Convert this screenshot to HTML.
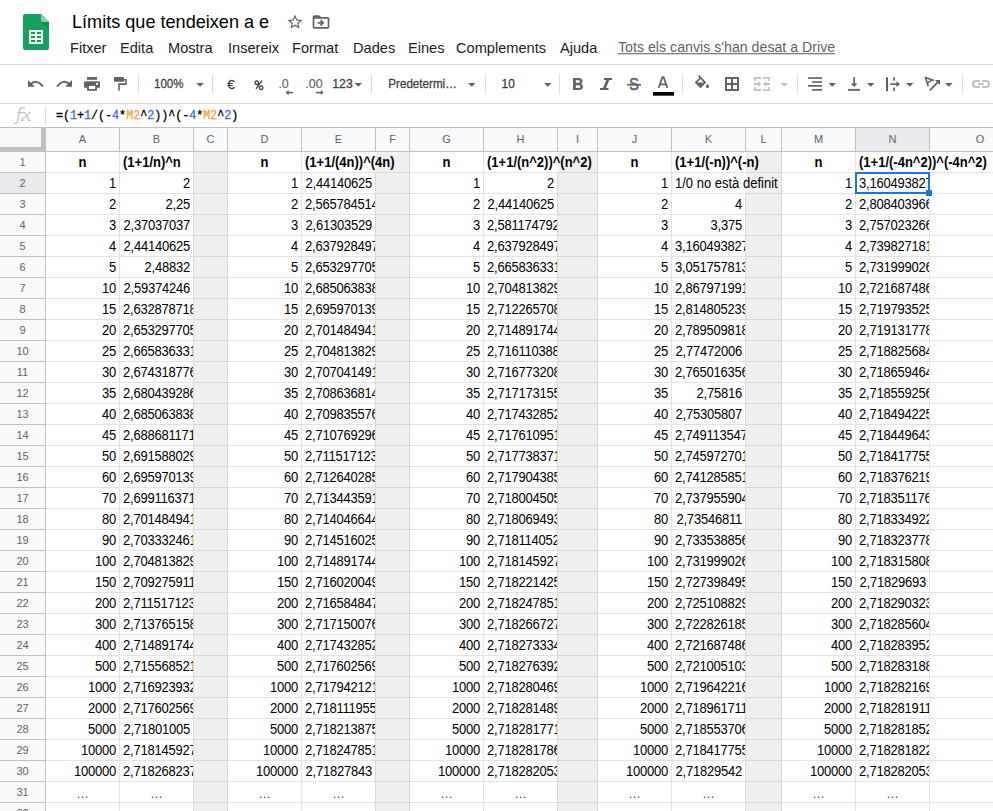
<!DOCTYPE html><html><head><meta charset="utf-8"><style>
*{margin:0;padding:0;box-sizing:border-box}
html,body{width:993px;height:811px;overflow:hidden;background:#fff}
body{position:relative;font-family:"Liberation Sans",sans-serif;color:#000}
.a{position:absolute}
.mi{position:absolute;top:40px;font-size:14.6px;color:#202124;white-space:nowrap;line-height:16px}
.hl{position:absolute;height:1px}
.vl{position:absolute;width:1px}
.ch{position:absolute;top:128px;height:23px;font-size:11px;color:#5f6368;text-align:center;line-height:23px}
.rh{position:absolute;left:0;width:45px;font-size:11px;color:#5f6368;text-align:center;line-height:20px}
.c{position:absolute;height:20px;font-size:13px;line-height:20px;white-space:nowrap;overflow:hidden;transform:translateY(0.7px) scaleY(1.1);transform-origin:0 14.6px}
.r{text-align:right;padding-right:3px;letter-spacing:-0.22px}
.l{text-align:left;padding-left:3px;letter-spacing:-0.22px}
.b{font-weight:bold;}
.ctr{text-align:center}
.dots{color:#444;letter-spacing:0.45px;transform:translateY(2.1px)!important;padding-left:0.45px}
.ov{overflow:visible}
</style></head><body>
<svg class="a" style="left:23px;top:14px" width="26" height="36" viewBox="0 0 26 36">
<path d="M2 0H18L26 8V34Q26 36 24 36H2Q0 36 0 34V2Q0 0 2 0Z" fill="#16a160"/>
<path d="M18 0L26 8H20Q18 8 18 6Z" fill="#87ceac"/>
<path d="M18 8L26 16V8Z" fill="#0b8043" opacity="0.45"/>
<rect x="6" y="16" width="14" height="14" fill="#f1f1f1"/>
<rect x="8" y="18" width="4" height="2" fill="#0f9d58"/><rect x="14" y="18" width="4" height="2" fill="#0f9d58"/>
<rect x="8" y="22" width="4" height="2" fill="#0f9d58"/><rect x="14" y="22" width="4" height="2" fill="#0f9d58"/>
<rect x="8" y="26" width="4" height="2" fill="#0f9d58"/><rect x="14" y="26" width="4" height="2" fill="#0f9d58"/>
</svg>
<div class="a" style="left:72px;top:11px;font-size:18.1px;line-height:22px;color:#000;white-space:nowrap">Límits que tendeixen a e</div>
<svg class="a" style="left:285.7px;top:13.3px" width="18" height="18" viewBox="0 0 24 24"><path fill="#5f6368" d="M22 9.24l-7.19-.62L12 2 9.19 8.63 2 9.24l5.46 4.73L5.82 21 12 17.27 18.18 21l-1.63-7.03L22 9.24zM12 15.4l-3.76 2.27 1-4.28-3.32-2.88 4.38-.38L12 6.1l1.71 4.04 4.38.38-3.32 2.88 1 4.28L12 15.4z"/></svg>
<svg class="a" style="left:311px;top:12px" width="20" height="20" viewBox="0 0 24 24"><path fill="#5f6368" d="M20 6h-8l-2-2H4c-1.1 0-1.99.9-1.99 2L2 18c0 1.1.9 2 2 2h16c1.1 0 2-.9 2-2V8c0-1.1-.9-2-2-2zm0 12H4V8h16v10zm-7.84-6H8v2h4.16l-1.59 1.59L11.99 17 16 13.01 11.99 9l-1.41 1.41L12.16 12z"/></svg>
<div class="mi" style="left:70px">Fitxer</div>
<div class="mi" style="left:120px">Edita</div>
<div class="mi" style="left:168px">Mostra</div>
<div class="mi" style="left:228px">Insereix</div>
<div class="mi" style="left:292px">Format</div>
<div class="mi" style="left:353px">Dades</div>
<div class="mi" style="left:408px">Eines</div>
<div class="mi" style="left:456px">Complements</div>
<div class="mi" style="left:560px">Ajuda</div>
<div class="mi" style="left:618px;top:39px;font-size:14.2px;transform:scaleY(1.08);transform-origin:0 12px;color:#5f6368;text-decoration:underline">Tots els canvis s'han desat a Drive</div>
<div class="hl" style="left:0;top:64px;width:993px;background:#dadce0"></div>
<div class="hl" style="left:0;top:103px;width:993px;background:#dadce0"></div>
<svg class="a" style="left:0;top:0" width="993" height="104" viewBox="0 0 993 104"><path fill="#5f6368" d="M28 80L28 86.8L34.8 86.8Z"/><path fill="none" stroke="#5f6368" stroke-width="1.9" d="M30.5 84.2Q36.5 78.5 43 86.4"/><path fill="#5f6368" d="M72 80L72 86.8L65.2 86.8Z"/><path fill="none" stroke="#5f6368" stroke-width="1.9" d="M69.5 84.2Q63.5 78.5 57 86.4"/><rect x="87" y="77" width="10" height="2.8" fill="#5f6368"/><path fill="#5f6368" d="M85.5 81.2H98.5Q100 81.2 100 82.7V87.7H97V90.7H87V87.7H84V82.7Q84 81.2 85.5 81.2Z"/><rect x="89" y="85.9" width="6.2" height="3.1" fill="#fff"/><rect x="96" y="83" width="2" height="1.8" fill="#fff"/><rect x="114" y="77.1" width="10" height="4.7" rx="0.6" fill="#5f6368"/><path fill="none" stroke="#5f6368" stroke-width="1.6" d="M124 79.7H126V84.1H119V90.7"/><rect x="138.0" y="74" width="1" height="20" fill="#dadce0"/><rect x="212.0" y="74" width="1" height="20" fill="#dadce0"/><rect x="371.0" y="74" width="1" height="20" fill="#dadce0"/><rect x="485.0" y="74" width="1" height="20" fill="#dadce0"/><rect x="559.0" y="74" width="1" height="20" fill="#dadce0"/><rect x="682.0" y="74" width="1" height="20" fill="#dadce0"/><rect x="797.0" y="74" width="1" height="20" fill="#dadce0"/><rect x="962.0" y="74" width="1" height="20" fill="#dadce0"/><path fill="#5f6368" d="M196.3 83H203.8L200.05 86.8Z"/><path fill="#5f6368" d="M354.5 83H362.0L358.25 86.8Z"/><path fill="#5f6368" d="M468 83H475.5L471.75 86.8Z"/><path fill="#5f6368" d="M544 83H551.5L547.75 86.8Z"/><path fill="#bdc1c6" d="M780.5 83H788.0L784.25 86.8Z"/><path fill="#5f6368" d="M828.5 83H836.0L832.25 86.8Z"/><path fill="#5f6368" d="M867 83H874.5L870.75 86.8Z"/><path fill="#5f6368" d="M906 83H913.5L909.75 86.8Z"/><path fill="#5f6368" d="M945 83H952.5L948.75 86.8Z"/><text x="629.2" y="90.3" font-family="Liberation Sans" font-size="16.5" fill="#5f6368" stroke="#5f6368" stroke-width="0.6" textLength="9.6" lengthAdjust="spacingAndGlyphs">S</text><rect x="627" y="83.9" width="14" height="1.7" fill="#5f6368"/><path fill="none" stroke="#5f6368" stroke-width="1.7" stroke-linejoin="miter" d="M658.6 87.9L662.4 77.1H663.6L667.4 87.9M660 84.4H666"/><rect x="653" y="92" width="21" height="3.7" fill="#000"/><path fill="#5f6368" transform="translate(566.5 74.6) scale(0.93 0.857)" d="M15.6 10.79c.97-.67 1.65-1.77 1.65-2.79 0-2.26-1.75-4-4-4H7v14h7.04c2.09 0 3.71-1.7 3.71-3.79 0-1.52-.86-2.82-2.1-3.42zM10 6.5h3c.83 0 1.5.67 1.5 1.5s-.67 1.5-1.5 1.5h-3v-3zm3.5 9H10v-3h3.5c.83 0 1.5.67 1.5 1.5s-.67 1.5-1.5 1.5z"/><path fill="#5f6368" d="M604 78H612V80H609.3L606 88H608.5V90H600V88H603L606.3 80H604Z"/><path fill="none" stroke="#5f6368" stroke-width="1.7" stroke-linejoin="miter" d="M698.6 75.6L705.1 82.5L700.5 87.1L695.9 82.5L700.5 77.9"/><path fill="#5f6368" d="M695.9 82.5H705.1L700.5 87.1Z"/><path fill="#5f6368" d="M707.5 83.8Q709.1 85.8 709.1 86.4A1.6 1.6 0 0 1 705.9 86.4Q705.9 85.8 707.5 83.8Z"/><path fill="none" stroke="#5f6368" stroke-width="2" d="M726 78H738V90H726ZM732 78V90M726 84H738"/><path fill="none" stroke="#bdc1c6" stroke-width="1.7" d="M754.8 81V77.9H760.8M763.2 77.9H769.2V81M754.8 87V90.1H760.8M763.2 90.1H769.2V87"/><path fill="#bdc1c6" d="M754 83.1H758.2V81L761 84L758.2 87V84.9H754ZM770 83.1H765.8V81L763 84L765.8 87V84.9H770Z"/><rect x="808" y="77.2" width="14" height="1.7" fill="#5f6368"/><rect x="812.2" y="81.2" width="9.799999999999955" height="1.7" fill="#5f6368"/><rect x="808" y="85" width="14" height="1.7" fill="#5f6368"/><rect x="812.2" y="89" width="9.799999999999955" height="1.7" fill="#5f6368"/><rect x="853.3" y="77.2" width="1.7" height="7" fill="#5f6368"/><path fill="#5f6368" d="M850.8 83.6H857.5L854.15 86.9Z"/><rect x="848" y="88.9" width="12" height="1.9" fill="#5f6368"/><rect x="886" y="77.2" width="2" height="14" fill="#5f6368"/><rect x="893.2" y="77.2" width="1.7" height="3.5" fill="#5f6368"/><rect x="893.2" y="87.6" width="1.7" height="3.5" fill="#5f6368"/><rect x="890.3" y="83.3" width="7" height="1.7" fill="#5f6368"/><path fill="#5f6368" d="M896.5 81L900 84.15L896.5 87.3Z"/><path fill="none" stroke="#5f6368" stroke-width="1.6" stroke-linejoin="round" d="M934 80.6L925.4 77.4L928.2 86.2M927.3 83.1L932 79.9"/><path fill="none" stroke="#5f6368" stroke-width="1.8" d="M929.8 90.4L938.8 81.2"/><path fill="#5f6368" d="M940 80V85L935 80Z"/><path fill="none" stroke="#bdc1c6" stroke-width="2" d="M980 80.9H976.2Q972.9 80.9 972.9 83.9Q972.9 86.9 976.2 86.9H980M982 80.9H985.8Q989 80.9 989 83.9Q989 86.9 985.8 86.9H982M978.1 84H983.8"/></svg>
<svg class="a" style="left:0;top:0" width="993" height="104" viewBox="0 0 993 104"><text x="154" y="88.2" font-family="Liberation Sans" font-size="13" font-weight="normal" fill="#3c4043" stroke="#3c4043" stroke-width="0.3" textLength="29.5" lengthAdjust="spacingAndGlyphs">100%</text><text x="227.2" y="89" font-family="Liberation Sans" font-size="13" font-weight="normal" fill="#3c4043" stroke="#3c4043" stroke-width="0.35" textLength="7.4" lengthAdjust="spacingAndGlyphs">€</text><path fill="none" stroke="#3c4043" stroke-width="1.35" d="M256.8 80.8A1.7 1.9 0 1 0 256.81 80.8ZM261.2 85.8A1.7 1.9 0 1 0 261.21 85.8ZM262 80.6L256 88.8"/><text x="278.4" y="88" font-family="Liberation Sans" font-size="13.4" font-weight="normal" fill="#5f6368" stroke="#5f6368" stroke-width="0.15" textLength="10.4" lengthAdjust="spacingAndGlyphs">.0</text><text x="305.3" y="88.2" font-family="Liberation Sans" font-size="13.4" font-weight="normal" fill="#5f6368" stroke="#5f6368" stroke-width="0.15" textLength="17.3" lengthAdjust="spacingAndGlyphs">.00</text><text x="332.3" y="88.2" font-family="Liberation Sans" font-size="13" font-weight="normal" fill="#3c4043" stroke="#3c4043" stroke-width="0.3" textLength="20.4" lengthAdjust="spacingAndGlyphs">123</text><text x="388.3" y="88" font-family="Liberation Sans" font-size="13" font-weight="normal" fill="#3c4043" stroke="#3c4043" stroke-width="0.3" textLength="68.5" lengthAdjust="spacingAndGlyphs">Predetermi…</text><text x="501.6" y="88" font-family="Liberation Sans" font-size="13" font-weight="normal" fill="#3c4043" stroke="#3c4043" stroke-width="0.3" textLength="13.3" lengthAdjust="spacingAndGlyphs">10</text></svg>
<svg class="a" style="left:284px;top:88px" width="10" height="8"><path fill="#5f6368" d="M2 3.8H9V5.4H2Z"/><path fill="#5f6368" d="M1.8 4.6L4.6 2V7.2Z"/></svg>
<svg class="a" style="left:315px;top:88px" width="10" height="8"><path fill="#5f6368" d="M1 3.8H7V5.4H1Z"/><path fill="#5f6368" d="M8.6 4.6L5.8 2V7.2Z"/></svg>
<svg class="a" style="left:0;top:104px" width="45" height="23" viewBox="0 104 45 23"><path fill="none" stroke="#c4c4c4" stroke-width="1.25" d="M13.6 122.3Q14.8 124.6 16.6 123.2Q17.6 122 18.3 117L19.6 110.5Q20.3 107.5 22.5 107.5Q24.5 107.7 24.3 109.2M17.2 112.7H25.5M21 120.4L30.3 112.4M24.6 112.4L29.3 120.4M20.6 120.4H23.5M27.8 120.4H31M28.5 112.4H30.7"/></svg>
<div class="vl" style="left:45px;top:107px;height:18px;background:#dadce0"></div>
<div class="a" style="left:56px;top:108px;font-family:'Liberation Mono',monospace;font-size:13.4px;line-height:16px;white-space:nowrap;transform:scaleX(0.872);transform-origin:0 0;-webkit-text-stroke:0.35px currentColor"><span style="color:#000">=(</span><span style="color:#3d6dd6">1</span><span style="color:#000">+</span><span style="color:#3d6dd6">1</span><span style="color:#000">/(-</span><span style="color:#3d6dd6">4</span><span style="color:#000">*</span><span style="color:#f4a33a">M2</span><span style="color:#000">^</span><span style="color:#3d6dd6">2</span><span style="color:#000">))^(-</span><span style="color:#3d6dd6">4</span><span style="color:#000">*</span><span style="color:#f4a33a">M2</span><span style="color:#000">^</span><span style="color:#3d6dd6">2</span><span style="color:#000">)</span></div>
<div class="a" style="left:0;top:128px;width:993px;height:23px;background:#f8f9fa"></div>
<div class="a" style="left:0;top:152px;width:45px;height:659px;background:#f8f9fa"></div>
<div class="a" style="left:856px;top:128px;width:73px;height:23px;background:#e8eaed"></div>
<div class="a" style="left:0;top:173px;width:45px;height:20px;background:#e8eaed"></div>
<div class="a" style="left:194px;top:152px;width:33px;height:659px;background:#efefef"></div>
<div class="a" style="left:376px;top:152px;width:33px;height:659px;background:#efefef"></div>
<div class="a" style="left:558px;top:152px;width:39px;height:659px;background:#efefef"></div>
<div class="a" style="left:746px;top:152px;width:35px;height:659px;background:#efefef"></div>
<div class="hl" style="left:0;top:127px;width:993px;background:#c0c0c0"></div>
<div class="hl" style="left:0;top:151px;width:993px;background:#c0c0c0"></div>
<div class="vl" style="left:45px;top:128px;height:23px;background:#c0c0c0"></div>
<div class="vl" style="left:119px;top:128px;height:23px;background:#c0c0c0"></div>
<div class="vl" style="left:193px;top:128px;height:23px;background:#c0c0c0"></div>
<div class="vl" style="left:227px;top:128px;height:23px;background:#c0c0c0"></div>
<div class="vl" style="left:301px;top:128px;height:23px;background:#c0c0c0"></div>
<div class="vl" style="left:375px;top:128px;height:23px;background:#c0c0c0"></div>
<div class="vl" style="left:409px;top:128px;height:23px;background:#c0c0c0"></div>
<div class="vl" style="left:483px;top:128px;height:23px;background:#c0c0c0"></div>
<div class="vl" style="left:557px;top:128px;height:23px;background:#c0c0c0"></div>
<div class="vl" style="left:597px;top:128px;height:23px;background:#c0c0c0"></div>
<div class="vl" style="left:671px;top:128px;height:23px;background:#c0c0c0"></div>
<div class="vl" style="left:745px;top:128px;height:23px;background:#c0c0c0"></div>
<div class="vl" style="left:781px;top:128px;height:23px;background:#c0c0c0"></div>
<div class="vl" style="left:855px;top:128px;height:23px;background:#c0c0c0"></div>
<div class="vl" style="left:929px;top:128px;height:23px;background:#c0c0c0"></div>
<div class="ch" style="left:46px;width:73px;color:#5f6368">A</div>
<div class="ch" style="left:120px;width:73px;color:#5f6368">B</div>
<div class="ch" style="left:194px;width:33px;color:#5f6368">C</div>
<div class="ch" style="left:228px;width:73px;color:#5f6368">D</div>
<div class="ch" style="left:302px;width:73px;color:#5f6368">E</div>
<div class="ch" style="left:376px;width:33px;color:#5f6368">F</div>
<div class="ch" style="left:410px;width:73px;color:#5f6368">G</div>
<div class="ch" style="left:484px;width:73px;color:#5f6368">H</div>
<div class="ch" style="left:558px;width:39px;color:#5f6368">I</div>
<div class="ch" style="left:598px;width:73px;color:#5f6368">J</div>
<div class="ch" style="left:672px;width:73px;color:#5f6368">K</div>
<div class="ch" style="left:746px;width:35px;color:#5f6368">L</div>
<div class="ch" style="left:782px;width:73px;color:#5f6368">M</div>
<div class="ch" style="left:856px;width:73px;color:#5f6368">N</div>
<div class="ch" style="left:930px;width:100px;color:#5f6368">O</div>
<div class="a" style="left:41px;top:128px;width:5px;height:24px;background:#c0c0c0"></div>
<div class="a" style="left:0;top:147px;width:46px;height:5px;background:#c0c0c0"></div>
<div class="vl" style="left:45px;top:152px;height:659px;background:#c0c0c0"></div>
<div class="hl" style="left:0;top:172px;width:45px;background:#c0c0c0"></div>
<div class="hl" style="left:46px;top:172px;width:947px;background:#e2e3e3"></div>
<div class="hl" style="left:194px;top:172px;width:33px;background:#d7d7d7"></div>
<div class="hl" style="left:376px;top:172px;width:33px;background:#d7d7d7"></div>
<div class="hl" style="left:558px;top:172px;width:39px;background:#d7d7d7"></div>
<div class="hl" style="left:746px;top:172px;width:35px;background:#d7d7d7"></div>
<div class="rh" style="top:152px;height:20px;color:#5f6368">1</div>
<div class="vl" style="left:119px;top:152px;height:21px;background:#e2e3e3"></div>
<div class="vl" style="left:193px;top:152px;height:21px;background:#d7d7d7"></div>
<div class="vl" style="left:227px;top:152px;height:21px;background:#d7d7d7"></div>
<div class="vl" style="left:301px;top:152px;height:21px;background:#e2e3e3"></div>
<div class="vl" style="left:409px;top:152px;height:21px;background:#d7d7d7"></div>
<div class="vl" style="left:483px;top:152px;height:21px;background:#e2e3e3"></div>
<div class="vl" style="left:597px;top:152px;height:21px;background:#d7d7d7"></div>
<div class="vl" style="left:671px;top:152px;height:21px;background:#e2e3e3"></div>
<div class="vl" style="left:781px;top:152px;height:21px;background:#d7d7d7"></div>
<div class="vl" style="left:855px;top:152px;height:21px;background:#e2e3e3"></div>
<div class="hl" style="left:0;top:193px;width:45px;background:#c0c0c0"></div>
<div class="hl" style="left:46px;top:193px;width:947px;background:#e2e3e3"></div>
<div class="hl" style="left:194px;top:193px;width:33px;background:#d7d7d7"></div>
<div class="hl" style="left:376px;top:193px;width:33px;background:#d7d7d7"></div>
<div class="hl" style="left:558px;top:193px;width:39px;background:#d7d7d7"></div>
<div class="hl" style="left:746px;top:193px;width:35px;background:#d7d7d7"></div>
<div class="rh" style="top:173px;height:20px;color:#5f6368">2</div>
<div class="vl" style="left:119px;top:173px;height:21px;background:#e2e3e3"></div>
<div class="vl" style="left:193px;top:173px;height:21px;background:#d7d7d7"></div>
<div class="vl" style="left:227px;top:173px;height:21px;background:#d7d7d7"></div>
<div class="vl" style="left:301px;top:173px;height:21px;background:#e2e3e3"></div>
<div class="vl" style="left:375px;top:173px;height:21px;background:#d7d7d7"></div>
<div class="vl" style="left:409px;top:173px;height:21px;background:#d7d7d7"></div>
<div class="vl" style="left:483px;top:173px;height:21px;background:#e2e3e3"></div>
<div class="vl" style="left:557px;top:173px;height:21px;background:#d7d7d7"></div>
<div class="vl" style="left:597px;top:173px;height:21px;background:#d7d7d7"></div>
<div class="vl" style="left:671px;top:173px;height:21px;background:#e2e3e3"></div>
<div class="vl" style="left:781px;top:173px;height:21px;background:#d7d7d7"></div>
<div class="vl" style="left:855px;top:173px;height:21px;background:#e2e3e3"></div>
<div class="vl" style="left:929px;top:173px;height:21px;background:#e2e3e3"></div>
<div class="hl" style="left:0;top:214px;width:45px;background:#c0c0c0"></div>
<div class="hl" style="left:46px;top:214px;width:947px;background:#e2e3e3"></div>
<div class="hl" style="left:194px;top:214px;width:33px;background:#d7d7d7"></div>
<div class="hl" style="left:376px;top:214px;width:33px;background:#d7d7d7"></div>
<div class="hl" style="left:558px;top:214px;width:39px;background:#d7d7d7"></div>
<div class="hl" style="left:746px;top:214px;width:35px;background:#d7d7d7"></div>
<div class="rh" style="top:194px;height:20px;color:#5f6368">3</div>
<div class="vl" style="left:119px;top:194px;height:21px;background:#e2e3e3"></div>
<div class="vl" style="left:193px;top:194px;height:21px;background:#d7d7d7"></div>
<div class="vl" style="left:227px;top:194px;height:21px;background:#d7d7d7"></div>
<div class="vl" style="left:301px;top:194px;height:21px;background:#e2e3e3"></div>
<div class="vl" style="left:375px;top:194px;height:21px;background:#d7d7d7"></div>
<div class="vl" style="left:409px;top:194px;height:21px;background:#d7d7d7"></div>
<div class="vl" style="left:483px;top:194px;height:21px;background:#e2e3e3"></div>
<div class="vl" style="left:557px;top:194px;height:21px;background:#d7d7d7"></div>
<div class="vl" style="left:597px;top:194px;height:21px;background:#d7d7d7"></div>
<div class="vl" style="left:671px;top:194px;height:21px;background:#e2e3e3"></div>
<div class="vl" style="left:745px;top:194px;height:21px;background:#d7d7d7"></div>
<div class="vl" style="left:781px;top:194px;height:21px;background:#d7d7d7"></div>
<div class="vl" style="left:855px;top:194px;height:21px;background:#e2e3e3"></div>
<div class="vl" style="left:929px;top:194px;height:21px;background:#e2e3e3"></div>
<div class="hl" style="left:0;top:235px;width:45px;background:#c0c0c0"></div>
<div class="hl" style="left:46px;top:235px;width:947px;background:#e2e3e3"></div>
<div class="hl" style="left:194px;top:235px;width:33px;background:#d7d7d7"></div>
<div class="hl" style="left:376px;top:235px;width:33px;background:#d7d7d7"></div>
<div class="hl" style="left:558px;top:235px;width:39px;background:#d7d7d7"></div>
<div class="hl" style="left:746px;top:235px;width:35px;background:#d7d7d7"></div>
<div class="rh" style="top:215px;height:20px;color:#5f6368">4</div>
<div class="vl" style="left:119px;top:215px;height:21px;background:#e2e3e3"></div>
<div class="vl" style="left:193px;top:215px;height:21px;background:#d7d7d7"></div>
<div class="vl" style="left:227px;top:215px;height:21px;background:#d7d7d7"></div>
<div class="vl" style="left:301px;top:215px;height:21px;background:#e2e3e3"></div>
<div class="vl" style="left:375px;top:215px;height:21px;background:#d7d7d7"></div>
<div class="vl" style="left:409px;top:215px;height:21px;background:#d7d7d7"></div>
<div class="vl" style="left:483px;top:215px;height:21px;background:#e2e3e3"></div>
<div class="vl" style="left:557px;top:215px;height:21px;background:#d7d7d7"></div>
<div class="vl" style="left:597px;top:215px;height:21px;background:#d7d7d7"></div>
<div class="vl" style="left:671px;top:215px;height:21px;background:#e2e3e3"></div>
<div class="vl" style="left:745px;top:215px;height:21px;background:#d7d7d7"></div>
<div class="vl" style="left:781px;top:215px;height:21px;background:#d7d7d7"></div>
<div class="vl" style="left:855px;top:215px;height:21px;background:#e2e3e3"></div>
<div class="vl" style="left:929px;top:215px;height:21px;background:#e2e3e3"></div>
<div class="hl" style="left:0;top:256px;width:45px;background:#c0c0c0"></div>
<div class="hl" style="left:46px;top:256px;width:947px;background:#e2e3e3"></div>
<div class="hl" style="left:194px;top:256px;width:33px;background:#d7d7d7"></div>
<div class="hl" style="left:376px;top:256px;width:33px;background:#d7d7d7"></div>
<div class="hl" style="left:558px;top:256px;width:39px;background:#d7d7d7"></div>
<div class="hl" style="left:746px;top:256px;width:35px;background:#d7d7d7"></div>
<div class="rh" style="top:236px;height:20px;color:#5f6368">5</div>
<div class="vl" style="left:119px;top:236px;height:21px;background:#e2e3e3"></div>
<div class="vl" style="left:193px;top:236px;height:21px;background:#d7d7d7"></div>
<div class="vl" style="left:227px;top:236px;height:21px;background:#d7d7d7"></div>
<div class="vl" style="left:301px;top:236px;height:21px;background:#e2e3e3"></div>
<div class="vl" style="left:375px;top:236px;height:21px;background:#d7d7d7"></div>
<div class="vl" style="left:409px;top:236px;height:21px;background:#d7d7d7"></div>
<div class="vl" style="left:483px;top:236px;height:21px;background:#e2e3e3"></div>
<div class="vl" style="left:557px;top:236px;height:21px;background:#d7d7d7"></div>
<div class="vl" style="left:597px;top:236px;height:21px;background:#d7d7d7"></div>
<div class="vl" style="left:671px;top:236px;height:21px;background:#e2e3e3"></div>
<div class="vl" style="left:745px;top:236px;height:21px;background:#d7d7d7"></div>
<div class="vl" style="left:781px;top:236px;height:21px;background:#d7d7d7"></div>
<div class="vl" style="left:855px;top:236px;height:21px;background:#e2e3e3"></div>
<div class="vl" style="left:929px;top:236px;height:21px;background:#e2e3e3"></div>
<div class="hl" style="left:0;top:277px;width:45px;background:#c0c0c0"></div>
<div class="hl" style="left:46px;top:277px;width:947px;background:#e2e3e3"></div>
<div class="hl" style="left:194px;top:277px;width:33px;background:#d7d7d7"></div>
<div class="hl" style="left:376px;top:277px;width:33px;background:#d7d7d7"></div>
<div class="hl" style="left:558px;top:277px;width:39px;background:#d7d7d7"></div>
<div class="hl" style="left:746px;top:277px;width:35px;background:#d7d7d7"></div>
<div class="rh" style="top:257px;height:20px;color:#5f6368">6</div>
<div class="vl" style="left:119px;top:257px;height:21px;background:#e2e3e3"></div>
<div class="vl" style="left:193px;top:257px;height:21px;background:#d7d7d7"></div>
<div class="vl" style="left:227px;top:257px;height:21px;background:#d7d7d7"></div>
<div class="vl" style="left:301px;top:257px;height:21px;background:#e2e3e3"></div>
<div class="vl" style="left:375px;top:257px;height:21px;background:#d7d7d7"></div>
<div class="vl" style="left:409px;top:257px;height:21px;background:#d7d7d7"></div>
<div class="vl" style="left:483px;top:257px;height:21px;background:#e2e3e3"></div>
<div class="vl" style="left:557px;top:257px;height:21px;background:#d7d7d7"></div>
<div class="vl" style="left:597px;top:257px;height:21px;background:#d7d7d7"></div>
<div class="vl" style="left:671px;top:257px;height:21px;background:#e2e3e3"></div>
<div class="vl" style="left:745px;top:257px;height:21px;background:#d7d7d7"></div>
<div class="vl" style="left:781px;top:257px;height:21px;background:#d7d7d7"></div>
<div class="vl" style="left:855px;top:257px;height:21px;background:#e2e3e3"></div>
<div class="vl" style="left:929px;top:257px;height:21px;background:#e2e3e3"></div>
<div class="hl" style="left:0;top:298px;width:45px;background:#c0c0c0"></div>
<div class="hl" style="left:46px;top:298px;width:947px;background:#e2e3e3"></div>
<div class="hl" style="left:194px;top:298px;width:33px;background:#d7d7d7"></div>
<div class="hl" style="left:376px;top:298px;width:33px;background:#d7d7d7"></div>
<div class="hl" style="left:558px;top:298px;width:39px;background:#d7d7d7"></div>
<div class="hl" style="left:746px;top:298px;width:35px;background:#d7d7d7"></div>
<div class="rh" style="top:278px;height:20px;color:#5f6368">7</div>
<div class="vl" style="left:119px;top:278px;height:21px;background:#e2e3e3"></div>
<div class="vl" style="left:193px;top:278px;height:21px;background:#d7d7d7"></div>
<div class="vl" style="left:227px;top:278px;height:21px;background:#d7d7d7"></div>
<div class="vl" style="left:301px;top:278px;height:21px;background:#e2e3e3"></div>
<div class="vl" style="left:375px;top:278px;height:21px;background:#d7d7d7"></div>
<div class="vl" style="left:409px;top:278px;height:21px;background:#d7d7d7"></div>
<div class="vl" style="left:483px;top:278px;height:21px;background:#e2e3e3"></div>
<div class="vl" style="left:557px;top:278px;height:21px;background:#d7d7d7"></div>
<div class="vl" style="left:597px;top:278px;height:21px;background:#d7d7d7"></div>
<div class="vl" style="left:671px;top:278px;height:21px;background:#e2e3e3"></div>
<div class="vl" style="left:745px;top:278px;height:21px;background:#d7d7d7"></div>
<div class="vl" style="left:781px;top:278px;height:21px;background:#d7d7d7"></div>
<div class="vl" style="left:855px;top:278px;height:21px;background:#e2e3e3"></div>
<div class="vl" style="left:929px;top:278px;height:21px;background:#e2e3e3"></div>
<div class="hl" style="left:0;top:319px;width:45px;background:#c0c0c0"></div>
<div class="hl" style="left:46px;top:319px;width:947px;background:#e2e3e3"></div>
<div class="hl" style="left:194px;top:319px;width:33px;background:#d7d7d7"></div>
<div class="hl" style="left:376px;top:319px;width:33px;background:#d7d7d7"></div>
<div class="hl" style="left:558px;top:319px;width:39px;background:#d7d7d7"></div>
<div class="hl" style="left:746px;top:319px;width:35px;background:#d7d7d7"></div>
<div class="rh" style="top:299px;height:20px;color:#5f6368">8</div>
<div class="vl" style="left:119px;top:299px;height:21px;background:#e2e3e3"></div>
<div class="vl" style="left:193px;top:299px;height:21px;background:#d7d7d7"></div>
<div class="vl" style="left:227px;top:299px;height:21px;background:#d7d7d7"></div>
<div class="vl" style="left:301px;top:299px;height:21px;background:#e2e3e3"></div>
<div class="vl" style="left:375px;top:299px;height:21px;background:#d7d7d7"></div>
<div class="vl" style="left:409px;top:299px;height:21px;background:#d7d7d7"></div>
<div class="vl" style="left:483px;top:299px;height:21px;background:#e2e3e3"></div>
<div class="vl" style="left:557px;top:299px;height:21px;background:#d7d7d7"></div>
<div class="vl" style="left:597px;top:299px;height:21px;background:#d7d7d7"></div>
<div class="vl" style="left:671px;top:299px;height:21px;background:#e2e3e3"></div>
<div class="vl" style="left:745px;top:299px;height:21px;background:#d7d7d7"></div>
<div class="vl" style="left:781px;top:299px;height:21px;background:#d7d7d7"></div>
<div class="vl" style="left:855px;top:299px;height:21px;background:#e2e3e3"></div>
<div class="vl" style="left:929px;top:299px;height:21px;background:#e2e3e3"></div>
<div class="hl" style="left:0;top:340px;width:45px;background:#c0c0c0"></div>
<div class="hl" style="left:46px;top:340px;width:947px;background:#e2e3e3"></div>
<div class="hl" style="left:194px;top:340px;width:33px;background:#d7d7d7"></div>
<div class="hl" style="left:376px;top:340px;width:33px;background:#d7d7d7"></div>
<div class="hl" style="left:558px;top:340px;width:39px;background:#d7d7d7"></div>
<div class="hl" style="left:746px;top:340px;width:35px;background:#d7d7d7"></div>
<div class="rh" style="top:320px;height:20px;color:#5f6368">9</div>
<div class="vl" style="left:119px;top:320px;height:21px;background:#e2e3e3"></div>
<div class="vl" style="left:193px;top:320px;height:21px;background:#d7d7d7"></div>
<div class="vl" style="left:227px;top:320px;height:21px;background:#d7d7d7"></div>
<div class="vl" style="left:301px;top:320px;height:21px;background:#e2e3e3"></div>
<div class="vl" style="left:375px;top:320px;height:21px;background:#d7d7d7"></div>
<div class="vl" style="left:409px;top:320px;height:21px;background:#d7d7d7"></div>
<div class="vl" style="left:483px;top:320px;height:21px;background:#e2e3e3"></div>
<div class="vl" style="left:557px;top:320px;height:21px;background:#d7d7d7"></div>
<div class="vl" style="left:597px;top:320px;height:21px;background:#d7d7d7"></div>
<div class="vl" style="left:671px;top:320px;height:21px;background:#e2e3e3"></div>
<div class="vl" style="left:745px;top:320px;height:21px;background:#d7d7d7"></div>
<div class="vl" style="left:781px;top:320px;height:21px;background:#d7d7d7"></div>
<div class="vl" style="left:855px;top:320px;height:21px;background:#e2e3e3"></div>
<div class="vl" style="left:929px;top:320px;height:21px;background:#e2e3e3"></div>
<div class="hl" style="left:0;top:361px;width:45px;background:#c0c0c0"></div>
<div class="hl" style="left:46px;top:361px;width:947px;background:#e2e3e3"></div>
<div class="hl" style="left:194px;top:361px;width:33px;background:#d7d7d7"></div>
<div class="hl" style="left:376px;top:361px;width:33px;background:#d7d7d7"></div>
<div class="hl" style="left:558px;top:361px;width:39px;background:#d7d7d7"></div>
<div class="hl" style="left:746px;top:361px;width:35px;background:#d7d7d7"></div>
<div class="rh" style="top:341px;height:20px;color:#5f6368">10</div>
<div class="vl" style="left:119px;top:341px;height:21px;background:#e2e3e3"></div>
<div class="vl" style="left:193px;top:341px;height:21px;background:#d7d7d7"></div>
<div class="vl" style="left:227px;top:341px;height:21px;background:#d7d7d7"></div>
<div class="vl" style="left:301px;top:341px;height:21px;background:#e2e3e3"></div>
<div class="vl" style="left:375px;top:341px;height:21px;background:#d7d7d7"></div>
<div class="vl" style="left:409px;top:341px;height:21px;background:#d7d7d7"></div>
<div class="vl" style="left:483px;top:341px;height:21px;background:#e2e3e3"></div>
<div class="vl" style="left:557px;top:341px;height:21px;background:#d7d7d7"></div>
<div class="vl" style="left:597px;top:341px;height:21px;background:#d7d7d7"></div>
<div class="vl" style="left:671px;top:341px;height:21px;background:#e2e3e3"></div>
<div class="vl" style="left:745px;top:341px;height:21px;background:#d7d7d7"></div>
<div class="vl" style="left:781px;top:341px;height:21px;background:#d7d7d7"></div>
<div class="vl" style="left:855px;top:341px;height:21px;background:#e2e3e3"></div>
<div class="vl" style="left:929px;top:341px;height:21px;background:#e2e3e3"></div>
<div class="hl" style="left:0;top:382px;width:45px;background:#c0c0c0"></div>
<div class="hl" style="left:46px;top:382px;width:947px;background:#e2e3e3"></div>
<div class="hl" style="left:194px;top:382px;width:33px;background:#d7d7d7"></div>
<div class="hl" style="left:376px;top:382px;width:33px;background:#d7d7d7"></div>
<div class="hl" style="left:558px;top:382px;width:39px;background:#d7d7d7"></div>
<div class="hl" style="left:746px;top:382px;width:35px;background:#d7d7d7"></div>
<div class="rh" style="top:362px;height:20px;color:#5f6368">11</div>
<div class="vl" style="left:119px;top:362px;height:21px;background:#e2e3e3"></div>
<div class="vl" style="left:193px;top:362px;height:21px;background:#d7d7d7"></div>
<div class="vl" style="left:227px;top:362px;height:21px;background:#d7d7d7"></div>
<div class="vl" style="left:301px;top:362px;height:21px;background:#e2e3e3"></div>
<div class="vl" style="left:375px;top:362px;height:21px;background:#d7d7d7"></div>
<div class="vl" style="left:409px;top:362px;height:21px;background:#d7d7d7"></div>
<div class="vl" style="left:483px;top:362px;height:21px;background:#e2e3e3"></div>
<div class="vl" style="left:557px;top:362px;height:21px;background:#d7d7d7"></div>
<div class="vl" style="left:597px;top:362px;height:21px;background:#d7d7d7"></div>
<div class="vl" style="left:671px;top:362px;height:21px;background:#e2e3e3"></div>
<div class="vl" style="left:745px;top:362px;height:21px;background:#d7d7d7"></div>
<div class="vl" style="left:781px;top:362px;height:21px;background:#d7d7d7"></div>
<div class="vl" style="left:855px;top:362px;height:21px;background:#e2e3e3"></div>
<div class="vl" style="left:929px;top:362px;height:21px;background:#e2e3e3"></div>
<div class="hl" style="left:0;top:403px;width:45px;background:#c0c0c0"></div>
<div class="hl" style="left:46px;top:403px;width:947px;background:#e2e3e3"></div>
<div class="hl" style="left:194px;top:403px;width:33px;background:#d7d7d7"></div>
<div class="hl" style="left:376px;top:403px;width:33px;background:#d7d7d7"></div>
<div class="hl" style="left:558px;top:403px;width:39px;background:#d7d7d7"></div>
<div class="hl" style="left:746px;top:403px;width:35px;background:#d7d7d7"></div>
<div class="rh" style="top:383px;height:20px;color:#5f6368">12</div>
<div class="vl" style="left:119px;top:383px;height:21px;background:#e2e3e3"></div>
<div class="vl" style="left:193px;top:383px;height:21px;background:#d7d7d7"></div>
<div class="vl" style="left:227px;top:383px;height:21px;background:#d7d7d7"></div>
<div class="vl" style="left:301px;top:383px;height:21px;background:#e2e3e3"></div>
<div class="vl" style="left:375px;top:383px;height:21px;background:#d7d7d7"></div>
<div class="vl" style="left:409px;top:383px;height:21px;background:#d7d7d7"></div>
<div class="vl" style="left:483px;top:383px;height:21px;background:#e2e3e3"></div>
<div class="vl" style="left:557px;top:383px;height:21px;background:#d7d7d7"></div>
<div class="vl" style="left:597px;top:383px;height:21px;background:#d7d7d7"></div>
<div class="vl" style="left:671px;top:383px;height:21px;background:#e2e3e3"></div>
<div class="vl" style="left:745px;top:383px;height:21px;background:#d7d7d7"></div>
<div class="vl" style="left:781px;top:383px;height:21px;background:#d7d7d7"></div>
<div class="vl" style="left:855px;top:383px;height:21px;background:#e2e3e3"></div>
<div class="vl" style="left:929px;top:383px;height:21px;background:#e2e3e3"></div>
<div class="hl" style="left:0;top:424px;width:45px;background:#c0c0c0"></div>
<div class="hl" style="left:46px;top:424px;width:947px;background:#e2e3e3"></div>
<div class="hl" style="left:194px;top:424px;width:33px;background:#d7d7d7"></div>
<div class="hl" style="left:376px;top:424px;width:33px;background:#d7d7d7"></div>
<div class="hl" style="left:558px;top:424px;width:39px;background:#d7d7d7"></div>
<div class="hl" style="left:746px;top:424px;width:35px;background:#d7d7d7"></div>
<div class="rh" style="top:404px;height:20px;color:#5f6368">13</div>
<div class="vl" style="left:119px;top:404px;height:21px;background:#e2e3e3"></div>
<div class="vl" style="left:193px;top:404px;height:21px;background:#d7d7d7"></div>
<div class="vl" style="left:227px;top:404px;height:21px;background:#d7d7d7"></div>
<div class="vl" style="left:301px;top:404px;height:21px;background:#e2e3e3"></div>
<div class="vl" style="left:375px;top:404px;height:21px;background:#d7d7d7"></div>
<div class="vl" style="left:409px;top:404px;height:21px;background:#d7d7d7"></div>
<div class="vl" style="left:483px;top:404px;height:21px;background:#e2e3e3"></div>
<div class="vl" style="left:557px;top:404px;height:21px;background:#d7d7d7"></div>
<div class="vl" style="left:597px;top:404px;height:21px;background:#d7d7d7"></div>
<div class="vl" style="left:671px;top:404px;height:21px;background:#e2e3e3"></div>
<div class="vl" style="left:745px;top:404px;height:21px;background:#d7d7d7"></div>
<div class="vl" style="left:781px;top:404px;height:21px;background:#d7d7d7"></div>
<div class="vl" style="left:855px;top:404px;height:21px;background:#e2e3e3"></div>
<div class="vl" style="left:929px;top:404px;height:21px;background:#e2e3e3"></div>
<div class="hl" style="left:0;top:445px;width:45px;background:#c0c0c0"></div>
<div class="hl" style="left:46px;top:445px;width:947px;background:#e2e3e3"></div>
<div class="hl" style="left:194px;top:445px;width:33px;background:#d7d7d7"></div>
<div class="hl" style="left:376px;top:445px;width:33px;background:#d7d7d7"></div>
<div class="hl" style="left:558px;top:445px;width:39px;background:#d7d7d7"></div>
<div class="hl" style="left:746px;top:445px;width:35px;background:#d7d7d7"></div>
<div class="rh" style="top:425px;height:20px;color:#5f6368">14</div>
<div class="vl" style="left:119px;top:425px;height:21px;background:#e2e3e3"></div>
<div class="vl" style="left:193px;top:425px;height:21px;background:#d7d7d7"></div>
<div class="vl" style="left:227px;top:425px;height:21px;background:#d7d7d7"></div>
<div class="vl" style="left:301px;top:425px;height:21px;background:#e2e3e3"></div>
<div class="vl" style="left:375px;top:425px;height:21px;background:#d7d7d7"></div>
<div class="vl" style="left:409px;top:425px;height:21px;background:#d7d7d7"></div>
<div class="vl" style="left:483px;top:425px;height:21px;background:#e2e3e3"></div>
<div class="vl" style="left:557px;top:425px;height:21px;background:#d7d7d7"></div>
<div class="vl" style="left:597px;top:425px;height:21px;background:#d7d7d7"></div>
<div class="vl" style="left:671px;top:425px;height:21px;background:#e2e3e3"></div>
<div class="vl" style="left:745px;top:425px;height:21px;background:#d7d7d7"></div>
<div class="vl" style="left:781px;top:425px;height:21px;background:#d7d7d7"></div>
<div class="vl" style="left:855px;top:425px;height:21px;background:#e2e3e3"></div>
<div class="vl" style="left:929px;top:425px;height:21px;background:#e2e3e3"></div>
<div class="hl" style="left:0;top:466px;width:45px;background:#c0c0c0"></div>
<div class="hl" style="left:46px;top:466px;width:947px;background:#e2e3e3"></div>
<div class="hl" style="left:194px;top:466px;width:33px;background:#d7d7d7"></div>
<div class="hl" style="left:376px;top:466px;width:33px;background:#d7d7d7"></div>
<div class="hl" style="left:558px;top:466px;width:39px;background:#d7d7d7"></div>
<div class="hl" style="left:746px;top:466px;width:35px;background:#d7d7d7"></div>
<div class="rh" style="top:446px;height:20px;color:#5f6368">15</div>
<div class="vl" style="left:119px;top:446px;height:21px;background:#e2e3e3"></div>
<div class="vl" style="left:193px;top:446px;height:21px;background:#d7d7d7"></div>
<div class="vl" style="left:227px;top:446px;height:21px;background:#d7d7d7"></div>
<div class="vl" style="left:301px;top:446px;height:21px;background:#e2e3e3"></div>
<div class="vl" style="left:375px;top:446px;height:21px;background:#d7d7d7"></div>
<div class="vl" style="left:409px;top:446px;height:21px;background:#d7d7d7"></div>
<div class="vl" style="left:483px;top:446px;height:21px;background:#e2e3e3"></div>
<div class="vl" style="left:557px;top:446px;height:21px;background:#d7d7d7"></div>
<div class="vl" style="left:597px;top:446px;height:21px;background:#d7d7d7"></div>
<div class="vl" style="left:671px;top:446px;height:21px;background:#e2e3e3"></div>
<div class="vl" style="left:745px;top:446px;height:21px;background:#d7d7d7"></div>
<div class="vl" style="left:781px;top:446px;height:21px;background:#d7d7d7"></div>
<div class="vl" style="left:855px;top:446px;height:21px;background:#e2e3e3"></div>
<div class="vl" style="left:929px;top:446px;height:21px;background:#e2e3e3"></div>
<div class="hl" style="left:0;top:487px;width:45px;background:#c0c0c0"></div>
<div class="hl" style="left:46px;top:487px;width:947px;background:#e2e3e3"></div>
<div class="hl" style="left:194px;top:487px;width:33px;background:#d7d7d7"></div>
<div class="hl" style="left:376px;top:487px;width:33px;background:#d7d7d7"></div>
<div class="hl" style="left:558px;top:487px;width:39px;background:#d7d7d7"></div>
<div class="hl" style="left:746px;top:487px;width:35px;background:#d7d7d7"></div>
<div class="rh" style="top:467px;height:20px;color:#5f6368">16</div>
<div class="vl" style="left:119px;top:467px;height:21px;background:#e2e3e3"></div>
<div class="vl" style="left:193px;top:467px;height:21px;background:#d7d7d7"></div>
<div class="vl" style="left:227px;top:467px;height:21px;background:#d7d7d7"></div>
<div class="vl" style="left:301px;top:467px;height:21px;background:#e2e3e3"></div>
<div class="vl" style="left:375px;top:467px;height:21px;background:#d7d7d7"></div>
<div class="vl" style="left:409px;top:467px;height:21px;background:#d7d7d7"></div>
<div class="vl" style="left:483px;top:467px;height:21px;background:#e2e3e3"></div>
<div class="vl" style="left:557px;top:467px;height:21px;background:#d7d7d7"></div>
<div class="vl" style="left:597px;top:467px;height:21px;background:#d7d7d7"></div>
<div class="vl" style="left:671px;top:467px;height:21px;background:#e2e3e3"></div>
<div class="vl" style="left:745px;top:467px;height:21px;background:#d7d7d7"></div>
<div class="vl" style="left:781px;top:467px;height:21px;background:#d7d7d7"></div>
<div class="vl" style="left:855px;top:467px;height:21px;background:#e2e3e3"></div>
<div class="vl" style="left:929px;top:467px;height:21px;background:#e2e3e3"></div>
<div class="hl" style="left:0;top:508px;width:45px;background:#c0c0c0"></div>
<div class="hl" style="left:46px;top:508px;width:947px;background:#e2e3e3"></div>
<div class="hl" style="left:194px;top:508px;width:33px;background:#d7d7d7"></div>
<div class="hl" style="left:376px;top:508px;width:33px;background:#d7d7d7"></div>
<div class="hl" style="left:558px;top:508px;width:39px;background:#d7d7d7"></div>
<div class="hl" style="left:746px;top:508px;width:35px;background:#d7d7d7"></div>
<div class="rh" style="top:488px;height:20px;color:#5f6368">17</div>
<div class="vl" style="left:119px;top:488px;height:21px;background:#e2e3e3"></div>
<div class="vl" style="left:193px;top:488px;height:21px;background:#d7d7d7"></div>
<div class="vl" style="left:227px;top:488px;height:21px;background:#d7d7d7"></div>
<div class="vl" style="left:301px;top:488px;height:21px;background:#e2e3e3"></div>
<div class="vl" style="left:375px;top:488px;height:21px;background:#d7d7d7"></div>
<div class="vl" style="left:409px;top:488px;height:21px;background:#d7d7d7"></div>
<div class="vl" style="left:483px;top:488px;height:21px;background:#e2e3e3"></div>
<div class="vl" style="left:557px;top:488px;height:21px;background:#d7d7d7"></div>
<div class="vl" style="left:597px;top:488px;height:21px;background:#d7d7d7"></div>
<div class="vl" style="left:671px;top:488px;height:21px;background:#e2e3e3"></div>
<div class="vl" style="left:745px;top:488px;height:21px;background:#d7d7d7"></div>
<div class="vl" style="left:781px;top:488px;height:21px;background:#d7d7d7"></div>
<div class="vl" style="left:855px;top:488px;height:21px;background:#e2e3e3"></div>
<div class="vl" style="left:929px;top:488px;height:21px;background:#e2e3e3"></div>
<div class="hl" style="left:0;top:529px;width:45px;background:#c0c0c0"></div>
<div class="hl" style="left:46px;top:529px;width:947px;background:#e2e3e3"></div>
<div class="hl" style="left:194px;top:529px;width:33px;background:#d7d7d7"></div>
<div class="hl" style="left:376px;top:529px;width:33px;background:#d7d7d7"></div>
<div class="hl" style="left:558px;top:529px;width:39px;background:#d7d7d7"></div>
<div class="hl" style="left:746px;top:529px;width:35px;background:#d7d7d7"></div>
<div class="rh" style="top:509px;height:20px;color:#5f6368">18</div>
<div class="vl" style="left:119px;top:509px;height:21px;background:#e2e3e3"></div>
<div class="vl" style="left:193px;top:509px;height:21px;background:#d7d7d7"></div>
<div class="vl" style="left:227px;top:509px;height:21px;background:#d7d7d7"></div>
<div class="vl" style="left:301px;top:509px;height:21px;background:#e2e3e3"></div>
<div class="vl" style="left:375px;top:509px;height:21px;background:#d7d7d7"></div>
<div class="vl" style="left:409px;top:509px;height:21px;background:#d7d7d7"></div>
<div class="vl" style="left:483px;top:509px;height:21px;background:#e2e3e3"></div>
<div class="vl" style="left:557px;top:509px;height:21px;background:#d7d7d7"></div>
<div class="vl" style="left:597px;top:509px;height:21px;background:#d7d7d7"></div>
<div class="vl" style="left:671px;top:509px;height:21px;background:#e2e3e3"></div>
<div class="vl" style="left:745px;top:509px;height:21px;background:#d7d7d7"></div>
<div class="vl" style="left:781px;top:509px;height:21px;background:#d7d7d7"></div>
<div class="vl" style="left:855px;top:509px;height:21px;background:#e2e3e3"></div>
<div class="vl" style="left:929px;top:509px;height:21px;background:#e2e3e3"></div>
<div class="hl" style="left:0;top:550px;width:45px;background:#c0c0c0"></div>
<div class="hl" style="left:46px;top:550px;width:947px;background:#e2e3e3"></div>
<div class="hl" style="left:194px;top:550px;width:33px;background:#d7d7d7"></div>
<div class="hl" style="left:376px;top:550px;width:33px;background:#d7d7d7"></div>
<div class="hl" style="left:558px;top:550px;width:39px;background:#d7d7d7"></div>
<div class="hl" style="left:746px;top:550px;width:35px;background:#d7d7d7"></div>
<div class="rh" style="top:530px;height:20px;color:#5f6368">19</div>
<div class="vl" style="left:119px;top:530px;height:21px;background:#e2e3e3"></div>
<div class="vl" style="left:193px;top:530px;height:21px;background:#d7d7d7"></div>
<div class="vl" style="left:227px;top:530px;height:21px;background:#d7d7d7"></div>
<div class="vl" style="left:301px;top:530px;height:21px;background:#e2e3e3"></div>
<div class="vl" style="left:375px;top:530px;height:21px;background:#d7d7d7"></div>
<div class="vl" style="left:409px;top:530px;height:21px;background:#d7d7d7"></div>
<div class="vl" style="left:483px;top:530px;height:21px;background:#e2e3e3"></div>
<div class="vl" style="left:557px;top:530px;height:21px;background:#d7d7d7"></div>
<div class="vl" style="left:597px;top:530px;height:21px;background:#d7d7d7"></div>
<div class="vl" style="left:671px;top:530px;height:21px;background:#e2e3e3"></div>
<div class="vl" style="left:745px;top:530px;height:21px;background:#d7d7d7"></div>
<div class="vl" style="left:781px;top:530px;height:21px;background:#d7d7d7"></div>
<div class="vl" style="left:855px;top:530px;height:21px;background:#e2e3e3"></div>
<div class="vl" style="left:929px;top:530px;height:21px;background:#e2e3e3"></div>
<div class="hl" style="left:0;top:571px;width:45px;background:#c0c0c0"></div>
<div class="hl" style="left:46px;top:571px;width:947px;background:#e2e3e3"></div>
<div class="hl" style="left:194px;top:571px;width:33px;background:#d7d7d7"></div>
<div class="hl" style="left:376px;top:571px;width:33px;background:#d7d7d7"></div>
<div class="hl" style="left:558px;top:571px;width:39px;background:#d7d7d7"></div>
<div class="hl" style="left:746px;top:571px;width:35px;background:#d7d7d7"></div>
<div class="rh" style="top:551px;height:20px;color:#5f6368">20</div>
<div class="vl" style="left:119px;top:551px;height:21px;background:#e2e3e3"></div>
<div class="vl" style="left:193px;top:551px;height:21px;background:#d7d7d7"></div>
<div class="vl" style="left:227px;top:551px;height:21px;background:#d7d7d7"></div>
<div class="vl" style="left:301px;top:551px;height:21px;background:#e2e3e3"></div>
<div class="vl" style="left:375px;top:551px;height:21px;background:#d7d7d7"></div>
<div class="vl" style="left:409px;top:551px;height:21px;background:#d7d7d7"></div>
<div class="vl" style="left:483px;top:551px;height:21px;background:#e2e3e3"></div>
<div class="vl" style="left:557px;top:551px;height:21px;background:#d7d7d7"></div>
<div class="vl" style="left:597px;top:551px;height:21px;background:#d7d7d7"></div>
<div class="vl" style="left:671px;top:551px;height:21px;background:#e2e3e3"></div>
<div class="vl" style="left:745px;top:551px;height:21px;background:#d7d7d7"></div>
<div class="vl" style="left:781px;top:551px;height:21px;background:#d7d7d7"></div>
<div class="vl" style="left:855px;top:551px;height:21px;background:#e2e3e3"></div>
<div class="vl" style="left:929px;top:551px;height:21px;background:#e2e3e3"></div>
<div class="hl" style="left:0;top:592px;width:45px;background:#c0c0c0"></div>
<div class="hl" style="left:46px;top:592px;width:947px;background:#e2e3e3"></div>
<div class="hl" style="left:194px;top:592px;width:33px;background:#d7d7d7"></div>
<div class="hl" style="left:376px;top:592px;width:33px;background:#d7d7d7"></div>
<div class="hl" style="left:558px;top:592px;width:39px;background:#d7d7d7"></div>
<div class="hl" style="left:746px;top:592px;width:35px;background:#d7d7d7"></div>
<div class="rh" style="top:572px;height:20px;color:#5f6368">21</div>
<div class="vl" style="left:119px;top:572px;height:21px;background:#e2e3e3"></div>
<div class="vl" style="left:193px;top:572px;height:21px;background:#d7d7d7"></div>
<div class="vl" style="left:227px;top:572px;height:21px;background:#d7d7d7"></div>
<div class="vl" style="left:301px;top:572px;height:21px;background:#e2e3e3"></div>
<div class="vl" style="left:375px;top:572px;height:21px;background:#d7d7d7"></div>
<div class="vl" style="left:409px;top:572px;height:21px;background:#d7d7d7"></div>
<div class="vl" style="left:483px;top:572px;height:21px;background:#e2e3e3"></div>
<div class="vl" style="left:557px;top:572px;height:21px;background:#d7d7d7"></div>
<div class="vl" style="left:597px;top:572px;height:21px;background:#d7d7d7"></div>
<div class="vl" style="left:671px;top:572px;height:21px;background:#e2e3e3"></div>
<div class="vl" style="left:745px;top:572px;height:21px;background:#d7d7d7"></div>
<div class="vl" style="left:781px;top:572px;height:21px;background:#d7d7d7"></div>
<div class="vl" style="left:855px;top:572px;height:21px;background:#e2e3e3"></div>
<div class="vl" style="left:929px;top:572px;height:21px;background:#e2e3e3"></div>
<div class="hl" style="left:0;top:613px;width:45px;background:#c0c0c0"></div>
<div class="hl" style="left:46px;top:613px;width:947px;background:#e2e3e3"></div>
<div class="hl" style="left:194px;top:613px;width:33px;background:#d7d7d7"></div>
<div class="hl" style="left:376px;top:613px;width:33px;background:#d7d7d7"></div>
<div class="hl" style="left:558px;top:613px;width:39px;background:#d7d7d7"></div>
<div class="hl" style="left:746px;top:613px;width:35px;background:#d7d7d7"></div>
<div class="rh" style="top:593px;height:20px;color:#5f6368">22</div>
<div class="vl" style="left:119px;top:593px;height:21px;background:#e2e3e3"></div>
<div class="vl" style="left:193px;top:593px;height:21px;background:#d7d7d7"></div>
<div class="vl" style="left:227px;top:593px;height:21px;background:#d7d7d7"></div>
<div class="vl" style="left:301px;top:593px;height:21px;background:#e2e3e3"></div>
<div class="vl" style="left:375px;top:593px;height:21px;background:#d7d7d7"></div>
<div class="vl" style="left:409px;top:593px;height:21px;background:#d7d7d7"></div>
<div class="vl" style="left:483px;top:593px;height:21px;background:#e2e3e3"></div>
<div class="vl" style="left:557px;top:593px;height:21px;background:#d7d7d7"></div>
<div class="vl" style="left:597px;top:593px;height:21px;background:#d7d7d7"></div>
<div class="vl" style="left:671px;top:593px;height:21px;background:#e2e3e3"></div>
<div class="vl" style="left:745px;top:593px;height:21px;background:#d7d7d7"></div>
<div class="vl" style="left:781px;top:593px;height:21px;background:#d7d7d7"></div>
<div class="vl" style="left:855px;top:593px;height:21px;background:#e2e3e3"></div>
<div class="vl" style="left:929px;top:593px;height:21px;background:#e2e3e3"></div>
<div class="hl" style="left:0;top:634px;width:45px;background:#c0c0c0"></div>
<div class="hl" style="left:46px;top:634px;width:947px;background:#e2e3e3"></div>
<div class="hl" style="left:194px;top:634px;width:33px;background:#d7d7d7"></div>
<div class="hl" style="left:376px;top:634px;width:33px;background:#d7d7d7"></div>
<div class="hl" style="left:558px;top:634px;width:39px;background:#d7d7d7"></div>
<div class="hl" style="left:746px;top:634px;width:35px;background:#d7d7d7"></div>
<div class="rh" style="top:614px;height:20px;color:#5f6368">23</div>
<div class="vl" style="left:119px;top:614px;height:21px;background:#e2e3e3"></div>
<div class="vl" style="left:193px;top:614px;height:21px;background:#d7d7d7"></div>
<div class="vl" style="left:227px;top:614px;height:21px;background:#d7d7d7"></div>
<div class="vl" style="left:301px;top:614px;height:21px;background:#e2e3e3"></div>
<div class="vl" style="left:375px;top:614px;height:21px;background:#d7d7d7"></div>
<div class="vl" style="left:409px;top:614px;height:21px;background:#d7d7d7"></div>
<div class="vl" style="left:483px;top:614px;height:21px;background:#e2e3e3"></div>
<div class="vl" style="left:557px;top:614px;height:21px;background:#d7d7d7"></div>
<div class="vl" style="left:597px;top:614px;height:21px;background:#d7d7d7"></div>
<div class="vl" style="left:671px;top:614px;height:21px;background:#e2e3e3"></div>
<div class="vl" style="left:745px;top:614px;height:21px;background:#d7d7d7"></div>
<div class="vl" style="left:781px;top:614px;height:21px;background:#d7d7d7"></div>
<div class="vl" style="left:855px;top:614px;height:21px;background:#e2e3e3"></div>
<div class="vl" style="left:929px;top:614px;height:21px;background:#e2e3e3"></div>
<div class="hl" style="left:0;top:655px;width:45px;background:#c0c0c0"></div>
<div class="hl" style="left:46px;top:655px;width:947px;background:#e2e3e3"></div>
<div class="hl" style="left:194px;top:655px;width:33px;background:#d7d7d7"></div>
<div class="hl" style="left:376px;top:655px;width:33px;background:#d7d7d7"></div>
<div class="hl" style="left:558px;top:655px;width:39px;background:#d7d7d7"></div>
<div class="hl" style="left:746px;top:655px;width:35px;background:#d7d7d7"></div>
<div class="rh" style="top:635px;height:20px;color:#5f6368">24</div>
<div class="vl" style="left:119px;top:635px;height:21px;background:#e2e3e3"></div>
<div class="vl" style="left:193px;top:635px;height:21px;background:#d7d7d7"></div>
<div class="vl" style="left:227px;top:635px;height:21px;background:#d7d7d7"></div>
<div class="vl" style="left:301px;top:635px;height:21px;background:#e2e3e3"></div>
<div class="vl" style="left:375px;top:635px;height:21px;background:#d7d7d7"></div>
<div class="vl" style="left:409px;top:635px;height:21px;background:#d7d7d7"></div>
<div class="vl" style="left:483px;top:635px;height:21px;background:#e2e3e3"></div>
<div class="vl" style="left:557px;top:635px;height:21px;background:#d7d7d7"></div>
<div class="vl" style="left:597px;top:635px;height:21px;background:#d7d7d7"></div>
<div class="vl" style="left:671px;top:635px;height:21px;background:#e2e3e3"></div>
<div class="vl" style="left:745px;top:635px;height:21px;background:#d7d7d7"></div>
<div class="vl" style="left:781px;top:635px;height:21px;background:#d7d7d7"></div>
<div class="vl" style="left:855px;top:635px;height:21px;background:#e2e3e3"></div>
<div class="vl" style="left:929px;top:635px;height:21px;background:#e2e3e3"></div>
<div class="hl" style="left:0;top:676px;width:45px;background:#c0c0c0"></div>
<div class="hl" style="left:46px;top:676px;width:947px;background:#e2e3e3"></div>
<div class="hl" style="left:194px;top:676px;width:33px;background:#d7d7d7"></div>
<div class="hl" style="left:376px;top:676px;width:33px;background:#d7d7d7"></div>
<div class="hl" style="left:558px;top:676px;width:39px;background:#d7d7d7"></div>
<div class="hl" style="left:746px;top:676px;width:35px;background:#d7d7d7"></div>
<div class="rh" style="top:656px;height:20px;color:#5f6368">25</div>
<div class="vl" style="left:119px;top:656px;height:21px;background:#e2e3e3"></div>
<div class="vl" style="left:193px;top:656px;height:21px;background:#d7d7d7"></div>
<div class="vl" style="left:227px;top:656px;height:21px;background:#d7d7d7"></div>
<div class="vl" style="left:301px;top:656px;height:21px;background:#e2e3e3"></div>
<div class="vl" style="left:375px;top:656px;height:21px;background:#d7d7d7"></div>
<div class="vl" style="left:409px;top:656px;height:21px;background:#d7d7d7"></div>
<div class="vl" style="left:483px;top:656px;height:21px;background:#e2e3e3"></div>
<div class="vl" style="left:557px;top:656px;height:21px;background:#d7d7d7"></div>
<div class="vl" style="left:597px;top:656px;height:21px;background:#d7d7d7"></div>
<div class="vl" style="left:671px;top:656px;height:21px;background:#e2e3e3"></div>
<div class="vl" style="left:745px;top:656px;height:21px;background:#d7d7d7"></div>
<div class="vl" style="left:781px;top:656px;height:21px;background:#d7d7d7"></div>
<div class="vl" style="left:855px;top:656px;height:21px;background:#e2e3e3"></div>
<div class="vl" style="left:929px;top:656px;height:21px;background:#e2e3e3"></div>
<div class="hl" style="left:0;top:697px;width:45px;background:#c0c0c0"></div>
<div class="hl" style="left:46px;top:697px;width:947px;background:#e2e3e3"></div>
<div class="hl" style="left:194px;top:697px;width:33px;background:#d7d7d7"></div>
<div class="hl" style="left:376px;top:697px;width:33px;background:#d7d7d7"></div>
<div class="hl" style="left:558px;top:697px;width:39px;background:#d7d7d7"></div>
<div class="hl" style="left:746px;top:697px;width:35px;background:#d7d7d7"></div>
<div class="rh" style="top:677px;height:20px;color:#5f6368">26</div>
<div class="vl" style="left:119px;top:677px;height:21px;background:#e2e3e3"></div>
<div class="vl" style="left:193px;top:677px;height:21px;background:#d7d7d7"></div>
<div class="vl" style="left:227px;top:677px;height:21px;background:#d7d7d7"></div>
<div class="vl" style="left:301px;top:677px;height:21px;background:#e2e3e3"></div>
<div class="vl" style="left:375px;top:677px;height:21px;background:#d7d7d7"></div>
<div class="vl" style="left:409px;top:677px;height:21px;background:#d7d7d7"></div>
<div class="vl" style="left:483px;top:677px;height:21px;background:#e2e3e3"></div>
<div class="vl" style="left:557px;top:677px;height:21px;background:#d7d7d7"></div>
<div class="vl" style="left:597px;top:677px;height:21px;background:#d7d7d7"></div>
<div class="vl" style="left:671px;top:677px;height:21px;background:#e2e3e3"></div>
<div class="vl" style="left:745px;top:677px;height:21px;background:#d7d7d7"></div>
<div class="vl" style="left:781px;top:677px;height:21px;background:#d7d7d7"></div>
<div class="vl" style="left:855px;top:677px;height:21px;background:#e2e3e3"></div>
<div class="vl" style="left:929px;top:677px;height:21px;background:#e2e3e3"></div>
<div class="hl" style="left:0;top:718px;width:45px;background:#c0c0c0"></div>
<div class="hl" style="left:46px;top:718px;width:947px;background:#e2e3e3"></div>
<div class="hl" style="left:194px;top:718px;width:33px;background:#d7d7d7"></div>
<div class="hl" style="left:376px;top:718px;width:33px;background:#d7d7d7"></div>
<div class="hl" style="left:558px;top:718px;width:39px;background:#d7d7d7"></div>
<div class="hl" style="left:746px;top:718px;width:35px;background:#d7d7d7"></div>
<div class="rh" style="top:698px;height:20px;color:#5f6368">27</div>
<div class="vl" style="left:119px;top:698px;height:21px;background:#e2e3e3"></div>
<div class="vl" style="left:193px;top:698px;height:21px;background:#d7d7d7"></div>
<div class="vl" style="left:227px;top:698px;height:21px;background:#d7d7d7"></div>
<div class="vl" style="left:301px;top:698px;height:21px;background:#e2e3e3"></div>
<div class="vl" style="left:375px;top:698px;height:21px;background:#d7d7d7"></div>
<div class="vl" style="left:409px;top:698px;height:21px;background:#d7d7d7"></div>
<div class="vl" style="left:483px;top:698px;height:21px;background:#e2e3e3"></div>
<div class="vl" style="left:557px;top:698px;height:21px;background:#d7d7d7"></div>
<div class="vl" style="left:597px;top:698px;height:21px;background:#d7d7d7"></div>
<div class="vl" style="left:671px;top:698px;height:21px;background:#e2e3e3"></div>
<div class="vl" style="left:745px;top:698px;height:21px;background:#d7d7d7"></div>
<div class="vl" style="left:781px;top:698px;height:21px;background:#d7d7d7"></div>
<div class="vl" style="left:855px;top:698px;height:21px;background:#e2e3e3"></div>
<div class="vl" style="left:929px;top:698px;height:21px;background:#e2e3e3"></div>
<div class="hl" style="left:0;top:739px;width:45px;background:#c0c0c0"></div>
<div class="hl" style="left:46px;top:739px;width:947px;background:#e2e3e3"></div>
<div class="hl" style="left:194px;top:739px;width:33px;background:#d7d7d7"></div>
<div class="hl" style="left:376px;top:739px;width:33px;background:#d7d7d7"></div>
<div class="hl" style="left:558px;top:739px;width:39px;background:#d7d7d7"></div>
<div class="hl" style="left:746px;top:739px;width:35px;background:#d7d7d7"></div>
<div class="rh" style="top:719px;height:20px;color:#5f6368">28</div>
<div class="vl" style="left:119px;top:719px;height:21px;background:#e2e3e3"></div>
<div class="vl" style="left:193px;top:719px;height:21px;background:#d7d7d7"></div>
<div class="vl" style="left:227px;top:719px;height:21px;background:#d7d7d7"></div>
<div class="vl" style="left:301px;top:719px;height:21px;background:#e2e3e3"></div>
<div class="vl" style="left:375px;top:719px;height:21px;background:#d7d7d7"></div>
<div class="vl" style="left:409px;top:719px;height:21px;background:#d7d7d7"></div>
<div class="vl" style="left:483px;top:719px;height:21px;background:#e2e3e3"></div>
<div class="vl" style="left:557px;top:719px;height:21px;background:#d7d7d7"></div>
<div class="vl" style="left:597px;top:719px;height:21px;background:#d7d7d7"></div>
<div class="vl" style="left:671px;top:719px;height:21px;background:#e2e3e3"></div>
<div class="vl" style="left:745px;top:719px;height:21px;background:#d7d7d7"></div>
<div class="vl" style="left:781px;top:719px;height:21px;background:#d7d7d7"></div>
<div class="vl" style="left:855px;top:719px;height:21px;background:#e2e3e3"></div>
<div class="vl" style="left:929px;top:719px;height:21px;background:#e2e3e3"></div>
<div class="hl" style="left:0;top:760px;width:45px;background:#c0c0c0"></div>
<div class="hl" style="left:46px;top:760px;width:947px;background:#e2e3e3"></div>
<div class="hl" style="left:194px;top:760px;width:33px;background:#d7d7d7"></div>
<div class="hl" style="left:376px;top:760px;width:33px;background:#d7d7d7"></div>
<div class="hl" style="left:558px;top:760px;width:39px;background:#d7d7d7"></div>
<div class="hl" style="left:746px;top:760px;width:35px;background:#d7d7d7"></div>
<div class="rh" style="top:740px;height:20px;color:#5f6368">29</div>
<div class="vl" style="left:119px;top:740px;height:21px;background:#e2e3e3"></div>
<div class="vl" style="left:193px;top:740px;height:21px;background:#d7d7d7"></div>
<div class="vl" style="left:227px;top:740px;height:21px;background:#d7d7d7"></div>
<div class="vl" style="left:301px;top:740px;height:21px;background:#e2e3e3"></div>
<div class="vl" style="left:375px;top:740px;height:21px;background:#d7d7d7"></div>
<div class="vl" style="left:409px;top:740px;height:21px;background:#d7d7d7"></div>
<div class="vl" style="left:483px;top:740px;height:21px;background:#e2e3e3"></div>
<div class="vl" style="left:557px;top:740px;height:21px;background:#d7d7d7"></div>
<div class="vl" style="left:597px;top:740px;height:21px;background:#d7d7d7"></div>
<div class="vl" style="left:671px;top:740px;height:21px;background:#e2e3e3"></div>
<div class="vl" style="left:745px;top:740px;height:21px;background:#d7d7d7"></div>
<div class="vl" style="left:781px;top:740px;height:21px;background:#d7d7d7"></div>
<div class="vl" style="left:855px;top:740px;height:21px;background:#e2e3e3"></div>
<div class="vl" style="left:929px;top:740px;height:21px;background:#e2e3e3"></div>
<div class="hl" style="left:0;top:781px;width:45px;background:#c0c0c0"></div>
<div class="hl" style="left:46px;top:781px;width:947px;background:#e2e3e3"></div>
<div class="hl" style="left:194px;top:781px;width:33px;background:#d7d7d7"></div>
<div class="hl" style="left:376px;top:781px;width:33px;background:#d7d7d7"></div>
<div class="hl" style="left:558px;top:781px;width:39px;background:#d7d7d7"></div>
<div class="hl" style="left:746px;top:781px;width:35px;background:#d7d7d7"></div>
<div class="rh" style="top:761px;height:20px;color:#5f6368">30</div>
<div class="vl" style="left:119px;top:761px;height:21px;background:#e2e3e3"></div>
<div class="vl" style="left:193px;top:761px;height:21px;background:#d7d7d7"></div>
<div class="vl" style="left:227px;top:761px;height:21px;background:#d7d7d7"></div>
<div class="vl" style="left:301px;top:761px;height:21px;background:#e2e3e3"></div>
<div class="vl" style="left:375px;top:761px;height:21px;background:#d7d7d7"></div>
<div class="vl" style="left:409px;top:761px;height:21px;background:#d7d7d7"></div>
<div class="vl" style="left:483px;top:761px;height:21px;background:#e2e3e3"></div>
<div class="vl" style="left:557px;top:761px;height:21px;background:#d7d7d7"></div>
<div class="vl" style="left:597px;top:761px;height:21px;background:#d7d7d7"></div>
<div class="vl" style="left:671px;top:761px;height:21px;background:#e2e3e3"></div>
<div class="vl" style="left:745px;top:761px;height:21px;background:#d7d7d7"></div>
<div class="vl" style="left:781px;top:761px;height:21px;background:#d7d7d7"></div>
<div class="vl" style="left:855px;top:761px;height:21px;background:#e2e3e3"></div>
<div class="vl" style="left:929px;top:761px;height:21px;background:#e2e3e3"></div>
<div class="hl" style="left:0;top:802px;width:45px;background:#c0c0c0"></div>
<div class="hl" style="left:46px;top:802px;width:947px;background:#e2e3e3"></div>
<div class="hl" style="left:194px;top:802px;width:33px;background:#d7d7d7"></div>
<div class="hl" style="left:376px;top:802px;width:33px;background:#d7d7d7"></div>
<div class="hl" style="left:558px;top:802px;width:39px;background:#d7d7d7"></div>
<div class="hl" style="left:746px;top:802px;width:35px;background:#d7d7d7"></div>
<div class="rh" style="top:782px;height:20px;color:#5f6368">31</div>
<div class="vl" style="left:119px;top:782px;height:21px;background:#e2e3e3"></div>
<div class="vl" style="left:193px;top:782px;height:21px;background:#d7d7d7"></div>
<div class="vl" style="left:227px;top:782px;height:21px;background:#d7d7d7"></div>
<div class="vl" style="left:301px;top:782px;height:21px;background:#e2e3e3"></div>
<div class="vl" style="left:375px;top:782px;height:21px;background:#d7d7d7"></div>
<div class="vl" style="left:409px;top:782px;height:21px;background:#d7d7d7"></div>
<div class="vl" style="left:483px;top:782px;height:21px;background:#e2e3e3"></div>
<div class="vl" style="left:557px;top:782px;height:21px;background:#d7d7d7"></div>
<div class="vl" style="left:597px;top:782px;height:21px;background:#d7d7d7"></div>
<div class="vl" style="left:671px;top:782px;height:21px;background:#e2e3e3"></div>
<div class="vl" style="left:745px;top:782px;height:21px;background:#d7d7d7"></div>
<div class="vl" style="left:781px;top:782px;height:21px;background:#d7d7d7"></div>
<div class="vl" style="left:855px;top:782px;height:21px;background:#e2e3e3"></div>
<div class="vl" style="left:929px;top:782px;height:21px;background:#e2e3e3"></div>
<div class="hl" style="left:0;top:823px;width:45px;background:#c0c0c0"></div>
<div class="hl" style="left:46px;top:823px;width:947px;background:#e2e3e3"></div>
<div class="hl" style="left:194px;top:823px;width:33px;background:#d7d7d7"></div>
<div class="hl" style="left:376px;top:823px;width:33px;background:#d7d7d7"></div>
<div class="hl" style="left:558px;top:823px;width:39px;background:#d7d7d7"></div>
<div class="hl" style="left:746px;top:823px;width:35px;background:#d7d7d7"></div>
<div class="rh" style="top:803px;height:20px;color:#5f6368">32</div>
<div class="vl" style="left:119px;top:803px;height:21px;background:#e2e3e3"></div>
<div class="vl" style="left:193px;top:803px;height:21px;background:#d7d7d7"></div>
<div class="vl" style="left:227px;top:803px;height:21px;background:#d7d7d7"></div>
<div class="vl" style="left:301px;top:803px;height:21px;background:#e2e3e3"></div>
<div class="vl" style="left:375px;top:803px;height:21px;background:#d7d7d7"></div>
<div class="vl" style="left:409px;top:803px;height:21px;background:#d7d7d7"></div>
<div class="vl" style="left:483px;top:803px;height:21px;background:#e2e3e3"></div>
<div class="vl" style="left:557px;top:803px;height:21px;background:#d7d7d7"></div>
<div class="vl" style="left:597px;top:803px;height:21px;background:#d7d7d7"></div>
<div class="vl" style="left:671px;top:803px;height:21px;background:#e2e3e3"></div>
<div class="vl" style="left:745px;top:803px;height:21px;background:#d7d7d7"></div>
<div class="vl" style="left:781px;top:803px;height:21px;background:#d7d7d7"></div>
<div class="vl" style="left:855px;top:803px;height:21px;background:#e2e3e3"></div>
<div class="vl" style="left:929px;top:803px;height:21px;background:#e2e3e3"></div>
<div class="c b ctr" style="left:46px;top:152px;width:73px;">n</div>
<div class="c b l ov" style="left:120px;top:152px;width:73px;letter-spacing:0">(1+1/n)^n</div>
<div class="c b ctr" style="left:228px;top:152px;width:73px;">n</div>
<div class="c b l ov" style="left:302px;top:152px;width:73px;letter-spacing:0">(1+1/(4n))^(4n)</div>
<div class="c b ctr" style="left:410px;top:152px;width:73px;">n</div>
<div class="c b l ov" style="left:484px;top:152px;width:73px;letter-spacing:0">(1+1/(n^2))^(n^2)</div>
<div class="c b ctr" style="left:598px;top:152px;width:73px;">n</div>
<div class="c b l ov" style="left:672px;top:152px;width:73px;letter-spacing:0">(1+1/(-n))^(-n)</div>
<div class="c b ctr" style="left:782px;top:152px;width:73px;">n</div>
<div class="c b l ov" style="left:856px;top:152px;width:73px;letter-spacing:0">(1+1/(-4n^2))^(-4n^2)</div>
<div class="c r" style="left:46px;top:173px;width:73px;">1</div>
<div class="c r" style="left:120px;top:173px;width:73px;">2</div>
<div class="c r" style="left:228px;top:173px;width:73px;">1</div>
<div class="c r" style="left:302px;top:173px;width:73px;">2,44140625</div>
<div class="c r" style="left:410px;top:173px;width:73px;">1</div>
<div class="c r" style="left:484px;top:173px;width:73px;">2</div>
<div class="c r" style="left:598px;top:173px;width:73px;">1</div>
<div class="c l ov" style="left:672px;top:173px;width:73px;letter-spacing:0">1/0 no està definit</div>
<div class="c r" style="left:782px;top:173px;width:73px;">1</div>
<div class="c l" style="left:856px;top:173px;width:73px;">3,160493827</div>
<div class="c r" style="left:46px;top:194px;width:73px;">2</div>
<div class="c r" style="left:120px;top:194px;width:73px;">2,25</div>
<div class="c r" style="left:228px;top:194px;width:73px;">2</div>
<div class="c l" style="left:302px;top:194px;width:73px;">2,565784514</div>
<div class="c r" style="left:410px;top:194px;width:73px;">2</div>
<div class="c r" style="left:484px;top:194px;width:73px;">2,44140625</div>
<div class="c r" style="left:598px;top:194px;width:73px;">2</div>
<div class="c r" style="left:672px;top:194px;width:73px;">4</div>
<div class="c r" style="left:782px;top:194px;width:73px;">2</div>
<div class="c l" style="left:856px;top:194px;width:73px;">2,808403966</div>
<div class="c r" style="left:46px;top:215px;width:73px;">3</div>
<div class="c r" style="left:120px;top:215px;width:73px;">2,37037037</div>
<div class="c r" style="left:228px;top:215px;width:73px;">3</div>
<div class="c r" style="left:302px;top:215px;width:73px;">2,61303529</div>
<div class="c r" style="left:410px;top:215px;width:73px;">3</div>
<div class="c l" style="left:484px;top:215px;width:73px;">2,581174792</div>
<div class="c r" style="left:598px;top:215px;width:73px;">3</div>
<div class="c r" style="left:672px;top:215px;width:73px;">3,375</div>
<div class="c r" style="left:782px;top:215px;width:73px;">3</div>
<div class="c l" style="left:856px;top:215px;width:73px;">2,757023266</div>
<div class="c r" style="left:46px;top:236px;width:73px;">4</div>
<div class="c r" style="left:120px;top:236px;width:73px;">2,44140625</div>
<div class="c r" style="left:228px;top:236px;width:73px;">4</div>
<div class="c l" style="left:302px;top:236px;width:73px;">2,637928497</div>
<div class="c r" style="left:410px;top:236px;width:73px;">4</div>
<div class="c l" style="left:484px;top:236px;width:73px;">2,637928497</div>
<div class="c r" style="left:598px;top:236px;width:73px;">4</div>
<div class="c l" style="left:672px;top:236px;width:73px;">3,160493827</div>
<div class="c r" style="left:782px;top:236px;width:73px;">4</div>
<div class="c l" style="left:856px;top:236px;width:73px;">2,739827181</div>
<div class="c r" style="left:46px;top:257px;width:73px;">5</div>
<div class="c r" style="left:120px;top:257px;width:73px;">2,48832</div>
<div class="c r" style="left:228px;top:257px;width:73px;">5</div>
<div class="c l" style="left:302px;top:257px;width:73px;">2,653297705</div>
<div class="c r" style="left:410px;top:257px;width:73px;">5</div>
<div class="c l" style="left:484px;top:257px;width:73px;">2,665836331</div>
<div class="c r" style="left:598px;top:257px;width:73px;">5</div>
<div class="c l" style="left:672px;top:257px;width:73px;">3,051757813</div>
<div class="c r" style="left:782px;top:257px;width:73px;">5</div>
<div class="c l" style="left:856px;top:257px;width:73px;">2,731999026</div>
<div class="c r" style="left:46px;top:278px;width:73px;">10</div>
<div class="c r" style="left:120px;top:278px;width:73px;">2,59374246</div>
<div class="c r" style="left:228px;top:278px;width:73px;">10</div>
<div class="c l" style="left:302px;top:278px;width:73px;">2,685063838</div>
<div class="c r" style="left:410px;top:278px;width:73px;">10</div>
<div class="c l" style="left:484px;top:278px;width:73px;">2,704813829</div>
<div class="c r" style="left:598px;top:278px;width:73px;">10</div>
<div class="c l" style="left:672px;top:278px;width:73px;">2,867971991</div>
<div class="c r" style="left:782px;top:278px;width:73px;">10</div>
<div class="c l" style="left:856px;top:278px;width:73px;">2,721687486</div>
<div class="c r" style="left:46px;top:299px;width:73px;">15</div>
<div class="c l" style="left:120px;top:299px;width:73px;">2,632878718</div>
<div class="c r" style="left:228px;top:299px;width:73px;">15</div>
<div class="c l" style="left:302px;top:299px;width:73px;">2,695970139</div>
<div class="c r" style="left:410px;top:299px;width:73px;">15</div>
<div class="c l" style="left:484px;top:299px;width:73px;">2,712265708</div>
<div class="c r" style="left:598px;top:299px;width:73px;">15</div>
<div class="c l" style="left:672px;top:299px;width:73px;">2,814805239</div>
<div class="c r" style="left:782px;top:299px;width:73px;">15</div>
<div class="c l" style="left:856px;top:299px;width:73px;">2,719793525</div>
<div class="c r" style="left:46px;top:320px;width:73px;">20</div>
<div class="c l" style="left:120px;top:320px;width:73px;">2,653297705</div>
<div class="c r" style="left:228px;top:320px;width:73px;">20</div>
<div class="c l" style="left:302px;top:320px;width:73px;">2,701484941</div>
<div class="c r" style="left:410px;top:320px;width:73px;">20</div>
<div class="c l" style="left:484px;top:320px;width:73px;">2,714891744</div>
<div class="c r" style="left:598px;top:320px;width:73px;">20</div>
<div class="c l" style="left:672px;top:320px;width:73px;">2,789509818</div>
<div class="c r" style="left:782px;top:320px;width:73px;">20</div>
<div class="c l" style="left:856px;top:320px;width:73px;">2,719131778</div>
<div class="c r" style="left:46px;top:341px;width:73px;">25</div>
<div class="c l" style="left:120px;top:341px;width:73px;">2,665836331</div>
<div class="c r" style="left:228px;top:341px;width:73px;">25</div>
<div class="c l" style="left:302px;top:341px;width:73px;">2,704813829</div>
<div class="c r" style="left:410px;top:341px;width:73px;">25</div>
<div class="c l" style="left:484px;top:341px;width:73px;">2,716110388</div>
<div class="c r" style="left:598px;top:341px;width:73px;">25</div>
<div class="c r" style="left:672px;top:341px;width:73px;">2,77472006</div>
<div class="c r" style="left:782px;top:341px;width:73px;">25</div>
<div class="c l" style="left:856px;top:341px;width:73px;">2,718825684</div>
<div class="c r" style="left:46px;top:362px;width:73px;">30</div>
<div class="c l" style="left:120px;top:362px;width:73px;">2,674318776</div>
<div class="c r" style="left:228px;top:362px;width:73px;">30</div>
<div class="c l" style="left:302px;top:362px;width:73px;">2,707041491</div>
<div class="c r" style="left:410px;top:362px;width:73px;">30</div>
<div class="c l" style="left:484px;top:362px;width:73px;">2,716773208</div>
<div class="c r" style="left:598px;top:362px;width:73px;">30</div>
<div class="c l" style="left:672px;top:362px;width:73px;">2,765016356</div>
<div class="c r" style="left:782px;top:362px;width:73px;">30</div>
<div class="c l" style="left:856px;top:362px;width:73px;">2,718659464</div>
<div class="c r" style="left:46px;top:383px;width:73px;">35</div>
<div class="c l" style="left:120px;top:383px;width:73px;">2,680439286</div>
<div class="c r" style="left:228px;top:383px;width:73px;">35</div>
<div class="c l" style="left:302px;top:383px;width:73px;">2,708636814</div>
<div class="c r" style="left:410px;top:383px;width:73px;">35</div>
<div class="c l" style="left:484px;top:383px;width:73px;">2,717173155</div>
<div class="c r" style="left:598px;top:383px;width:73px;">35</div>
<div class="c r" style="left:672px;top:383px;width:73px;">2,75816</div>
<div class="c r" style="left:782px;top:383px;width:73px;">35</div>
<div class="c l" style="left:856px;top:383px;width:73px;">2,718559256</div>
<div class="c r" style="left:46px;top:404px;width:73px;">40</div>
<div class="c l" style="left:120px;top:404px;width:73px;">2,685063838</div>
<div class="c r" style="left:228px;top:404px;width:73px;">40</div>
<div class="c l" style="left:302px;top:404px;width:73px;">2,709835576</div>
<div class="c r" style="left:410px;top:404px;width:73px;">40</div>
<div class="c l" style="left:484px;top:404px;width:73px;">2,717432852</div>
<div class="c r" style="left:598px;top:404px;width:73px;">40</div>
<div class="c r" style="left:672px;top:404px;width:73px;">2,75305807</div>
<div class="c r" style="left:782px;top:404px;width:73px;">40</div>
<div class="c l" style="left:856px;top:404px;width:73px;">2,718494225</div>
<div class="c r" style="left:46px;top:425px;width:73px;">45</div>
<div class="c l" style="left:120px;top:425px;width:73px;">2,688681171</div>
<div class="c r" style="left:228px;top:425px;width:73px;">45</div>
<div class="c l" style="left:302px;top:425px;width:73px;">2,710769296</div>
<div class="c r" style="left:410px;top:425px;width:73px;">45</div>
<div class="c l" style="left:484px;top:425px;width:73px;">2,717610951</div>
<div class="c r" style="left:598px;top:425px;width:73px;">45</div>
<div class="c l" style="left:672px;top:425px;width:73px;">2,749113547</div>
<div class="c r" style="left:782px;top:425px;width:73px;">45</div>
<div class="c l" style="left:856px;top:425px;width:73px;">2,718449643</div>
<div class="c r" style="left:46px;top:446px;width:73px;">50</div>
<div class="c l" style="left:120px;top:446px;width:73px;">2,691588029</div>
<div class="c r" style="left:228px;top:446px;width:73px;">50</div>
<div class="c l" style="left:302px;top:446px;width:73px;">2,711517123</div>
<div class="c r" style="left:410px;top:446px;width:73px;">50</div>
<div class="c l" style="left:484px;top:446px;width:73px;">2,717738371</div>
<div class="c r" style="left:598px;top:446px;width:73px;">50</div>
<div class="c l" style="left:672px;top:446px;width:73px;">2,745972701</div>
<div class="c r" style="left:782px;top:446px;width:73px;">50</div>
<div class="c l" style="left:856px;top:446px;width:73px;">2,718417755</div>
<div class="c r" style="left:46px;top:467px;width:73px;">60</div>
<div class="c l" style="left:120px;top:467px;width:73px;">2,695970139</div>
<div class="c r" style="left:228px;top:467px;width:73px;">60</div>
<div class="c l" style="left:302px;top:467px;width:73px;">2,712640285</div>
<div class="c r" style="left:410px;top:467px;width:73px;">60</div>
<div class="c l" style="left:484px;top:467px;width:73px;">2,717904385</div>
<div class="c r" style="left:598px;top:467px;width:73px;">60</div>
<div class="c l" style="left:672px;top:467px;width:73px;">2,741285851</div>
<div class="c r" style="left:782px;top:467px;width:73px;">60</div>
<div class="c l" style="left:856px;top:467px;width:73px;">2,718376219</div>
<div class="c r" style="left:46px;top:488px;width:73px;">70</div>
<div class="c l" style="left:120px;top:488px;width:73px;">2,699116371</div>
<div class="c r" style="left:228px;top:488px;width:73px;">70</div>
<div class="c l" style="left:302px;top:488px;width:73px;">2,713443591</div>
<div class="c r" style="left:410px;top:488px;width:73px;">70</div>
<div class="c l" style="left:484px;top:488px;width:73px;">2,718004505</div>
<div class="c r" style="left:598px;top:488px;width:73px;">70</div>
<div class="c l" style="left:672px;top:488px;width:73px;">2,737955904</div>
<div class="c r" style="left:782px;top:488px;width:73px;">70</div>
<div class="c l" style="left:856px;top:488px;width:73px;">2,718351176</div>
<div class="c r" style="left:46px;top:509px;width:73px;">80</div>
<div class="c l" style="left:120px;top:509px;width:73px;">2,701484941</div>
<div class="c r" style="left:228px;top:509px;width:73px;">80</div>
<div class="c l" style="left:302px;top:509px;width:73px;">2,714046644</div>
<div class="c r" style="left:410px;top:509px;width:73px;">80</div>
<div class="c l" style="left:484px;top:509px;width:73px;">2,718069493</div>
<div class="c r" style="left:598px;top:509px;width:73px;">80</div>
<div class="c r" style="left:672px;top:509px;width:73px;">2,73546811</div>
<div class="c r" style="left:782px;top:509px;width:73px;">80</div>
<div class="c l" style="left:856px;top:509px;width:73px;">2,718334922</div>
<div class="c r" style="left:46px;top:530px;width:73px;">90</div>
<div class="c l" style="left:120px;top:530px;width:73px;">2,703332461</div>
<div class="c r" style="left:228px;top:530px;width:73px;">90</div>
<div class="c l" style="left:302px;top:530px;width:73px;">2,714516025</div>
<div class="c r" style="left:410px;top:530px;width:73px;">90</div>
<div class="c l" style="left:484px;top:530px;width:73px;">2,718114052</div>
<div class="c r" style="left:598px;top:530px;width:73px;">90</div>
<div class="c l" style="left:672px;top:530px;width:73px;">2,733538856</div>
<div class="c r" style="left:782px;top:530px;width:73px;">90</div>
<div class="c l" style="left:856px;top:530px;width:73px;">2,718323778</div>
<div class="c r" style="left:46px;top:551px;width:73px;">100</div>
<div class="c l" style="left:120px;top:551px;width:73px;">2,704813829</div>
<div class="c r" style="left:228px;top:551px;width:73px;">100</div>
<div class="c l" style="left:302px;top:551px;width:73px;">2,714891744</div>
<div class="c r" style="left:410px;top:551px;width:73px;">100</div>
<div class="c l" style="left:484px;top:551px;width:73px;">2,718145927</div>
<div class="c r" style="left:598px;top:551px;width:73px;">100</div>
<div class="c l" style="left:672px;top:551px;width:73px;">2,731999026</div>
<div class="c r" style="left:782px;top:551px;width:73px;">100</div>
<div class="c l" style="left:856px;top:551px;width:73px;">2,718315808</div>
<div class="c r" style="left:46px;top:572px;width:73px;">150</div>
<div class="c l" style="left:120px;top:572px;width:73px;">2,709275911</div>
<div class="c r" style="left:228px;top:572px;width:73px;">150</div>
<div class="c l" style="left:302px;top:572px;width:73px;">2,716020049</div>
<div class="c r" style="left:410px;top:572px;width:73px;">150</div>
<div class="c l" style="left:484px;top:572px;width:73px;">2,718221425</div>
<div class="c r" style="left:598px;top:572px;width:73px;">150</div>
<div class="c l" style="left:672px;top:572px;width:73px;">2,727398495</div>
<div class="c r" style="left:782px;top:572px;width:73px;">150</div>
<div class="c r" style="left:856px;top:572px;width:73px;">2,71829693</div>
<div class="c r" style="left:46px;top:593px;width:73px;">200</div>
<div class="c l" style="left:120px;top:593px;width:73px;">2,711517123</div>
<div class="c r" style="left:228px;top:593px;width:73px;">200</div>
<div class="c l" style="left:302px;top:593px;width:73px;">2,716584847</div>
<div class="c r" style="left:410px;top:593px;width:73px;">200</div>
<div class="c l" style="left:484px;top:593px;width:73px;">2,718247851</div>
<div class="c r" style="left:598px;top:593px;width:73px;">200</div>
<div class="c l" style="left:672px;top:593px;width:73px;">2,725108829</div>
<div class="c r" style="left:782px;top:593px;width:73px;">200</div>
<div class="c l" style="left:856px;top:593px;width:73px;">2,718290323</div>
<div class="c r" style="left:46px;top:614px;width:73px;">300</div>
<div class="c l" style="left:120px;top:614px;width:73px;">2,713765158</div>
<div class="c r" style="left:228px;top:614px;width:73px;">300</div>
<div class="c l" style="left:302px;top:614px;width:73px;">2,717150076</div>
<div class="c r" style="left:410px;top:614px;width:73px;">300</div>
<div class="c l" style="left:484px;top:614px;width:73px;">2,718266727</div>
<div class="c r" style="left:598px;top:614px;width:73px;">300</div>
<div class="c l" style="left:672px;top:614px;width:73px;">2,722826185</div>
<div class="c r" style="left:782px;top:614px;width:73px;">300</div>
<div class="c l" style="left:856px;top:614px;width:73px;">2,718285604</div>
<div class="c r" style="left:46px;top:635px;width:73px;">400</div>
<div class="c l" style="left:120px;top:635px;width:73px;">2,714891744</div>
<div class="c r" style="left:228px;top:635px;width:73px;">400</div>
<div class="c l" style="left:302px;top:635px;width:73px;">2,717432852</div>
<div class="c r" style="left:410px;top:635px;width:73px;">400</div>
<div class="c l" style="left:484px;top:635px;width:73px;">2,718273334</div>
<div class="c r" style="left:598px;top:635px;width:73px;">400</div>
<div class="c l" style="left:672px;top:635px;width:73px;">2,721687486</div>
<div class="c r" style="left:782px;top:635px;width:73px;">400</div>
<div class="c l" style="left:856px;top:635px;width:73px;">2,718283952</div>
<div class="c r" style="left:46px;top:656px;width:73px;">500</div>
<div class="c l" style="left:120px;top:656px;width:73px;">2,715568521</div>
<div class="c r" style="left:228px;top:656px;width:73px;">500</div>
<div class="c l" style="left:302px;top:656px;width:73px;">2,717602569</div>
<div class="c r" style="left:410px;top:656px;width:73px;">500</div>
<div class="c l" style="left:484px;top:656px;width:73px;">2,718276392</div>
<div class="c r" style="left:598px;top:656px;width:73px;">500</div>
<div class="c l" style="left:672px;top:656px;width:73px;">2,721005103</div>
<div class="c r" style="left:782px;top:656px;width:73px;">500</div>
<div class="c l" style="left:856px;top:656px;width:73px;">2,718283188</div>
<div class="c r" style="left:46px;top:677px;width:73px;">1000</div>
<div class="c l" style="left:120px;top:677px;width:73px;">2,716923932</div>
<div class="c r" style="left:228px;top:677px;width:73px;">1000</div>
<div class="c l" style="left:302px;top:677px;width:73px;">2,717942121</div>
<div class="c r" style="left:410px;top:677px;width:73px;">1000</div>
<div class="c l" style="left:484px;top:677px;width:73px;">2,718280469</div>
<div class="c r" style="left:598px;top:677px;width:73px;">1000</div>
<div class="c l" style="left:672px;top:677px;width:73px;">2,719642216</div>
<div class="c r" style="left:782px;top:677px;width:73px;">1000</div>
<div class="c l" style="left:856px;top:677px;width:73px;">2,718282169</div>
<div class="c r" style="left:46px;top:698px;width:73px;">2000</div>
<div class="c l" style="left:120px;top:698px;width:73px;">2,717602569</div>
<div class="c r" style="left:228px;top:698px;width:73px;">2000</div>
<div class="c l" style="left:302px;top:698px;width:73px;">2,718111955</div>
<div class="c r" style="left:410px;top:698px;width:73px;">2000</div>
<div class="c l" style="left:484px;top:698px;width:73px;">2,718281489</div>
<div class="c r" style="left:598px;top:698px;width:73px;">2000</div>
<div class="c l" style="left:672px;top:698px;width:73px;">2,718961711</div>
<div class="c r" style="left:782px;top:698px;width:73px;">2000</div>
<div class="c l" style="left:856px;top:698px;width:73px;">2,718281911</div>
<div class="c r" style="left:46px;top:719px;width:73px;">5000</div>
<div class="c r" style="left:120px;top:719px;width:73px;">2,71801005</div>
<div class="c r" style="left:228px;top:719px;width:73px;">5000</div>
<div class="c l" style="left:302px;top:719px;width:73px;">2,718213875</div>
<div class="c r" style="left:410px;top:719px;width:73px;">5000</div>
<div class="c l" style="left:484px;top:719px;width:73px;">2,718281771</div>
<div class="c r" style="left:598px;top:719px;width:73px;">5000</div>
<div class="c l" style="left:672px;top:719px;width:73px;">2,718553706</div>
<div class="c r" style="left:782px;top:719px;width:73px;">5000</div>
<div class="c l" style="left:856px;top:719px;width:73px;">2,718281852</div>
<div class="c r" style="left:46px;top:740px;width:73px;">10000</div>
<div class="c l" style="left:120px;top:740px;width:73px;">2,718145927</div>
<div class="c r" style="left:228px;top:740px;width:73px;">10000</div>
<div class="c l" style="left:302px;top:740px;width:73px;">2,718247851</div>
<div class="c r" style="left:410px;top:740px;width:73px;">10000</div>
<div class="c l" style="left:484px;top:740px;width:73px;">2,718281786</div>
<div class="c r" style="left:598px;top:740px;width:73px;">10000</div>
<div class="c l" style="left:672px;top:740px;width:73px;">2,718417755</div>
<div class="c r" style="left:782px;top:740px;width:73px;">10000</div>
<div class="c l" style="left:856px;top:740px;width:73px;">2,718281822</div>
<div class="c r" style="left:46px;top:761px;width:73px;">100000</div>
<div class="c l" style="left:120px;top:761px;width:73px;">2,718268237</div>
<div class="c r" style="left:228px;top:761px;width:73px;">100000</div>
<div class="c r" style="left:302px;top:761px;width:73px;">2,71827843</div>
<div class="c r" style="left:410px;top:761px;width:73px;">100000</div>
<div class="c l" style="left:484px;top:761px;width:73px;">2,718282053</div>
<div class="c r" style="left:598px;top:761px;width:73px;">100000</div>
<div class="c r" style="left:672px;top:761px;width:73px;">2,71829542</div>
<div class="c r" style="left:782px;top:761px;width:73px;">100000</div>
<div class="c l" style="left:856px;top:761px;width:73px;">2,718282053</div>
<div class="c ctr dots" style="left:46px;top:782px;width:73px;">...</div>
<div class="c ctr dots" style="left:120px;top:782px;width:73px;">...</div>
<div class="c ctr dots" style="left:228px;top:782px;width:73px;">...</div>
<div class="c ctr dots" style="left:302px;top:782px;width:73px;">...</div>
<div class="c ctr dots" style="left:410px;top:782px;width:73px;">...</div>
<div class="c ctr dots" style="left:484px;top:782px;width:73px;">...</div>
<div class="c ctr dots" style="left:598px;top:782px;width:73px;">...</div>
<div class="c ctr dots" style="left:672px;top:782px;width:73px;">...</div>
<div class="c ctr dots" style="left:782px;top:782px;width:73px;">...</div>
<div class="c ctr dots" style="left:856px;top:782px;width:73px;">...</div>
<div class="a" style="left:855px;top:172px;width:75px;height:22px;border:2px solid #1a73e8"></div>
<div class="a" style="left:926px;top:190px;width:6px;height:6px;background:#1a73e8"></div>
</body></html>
